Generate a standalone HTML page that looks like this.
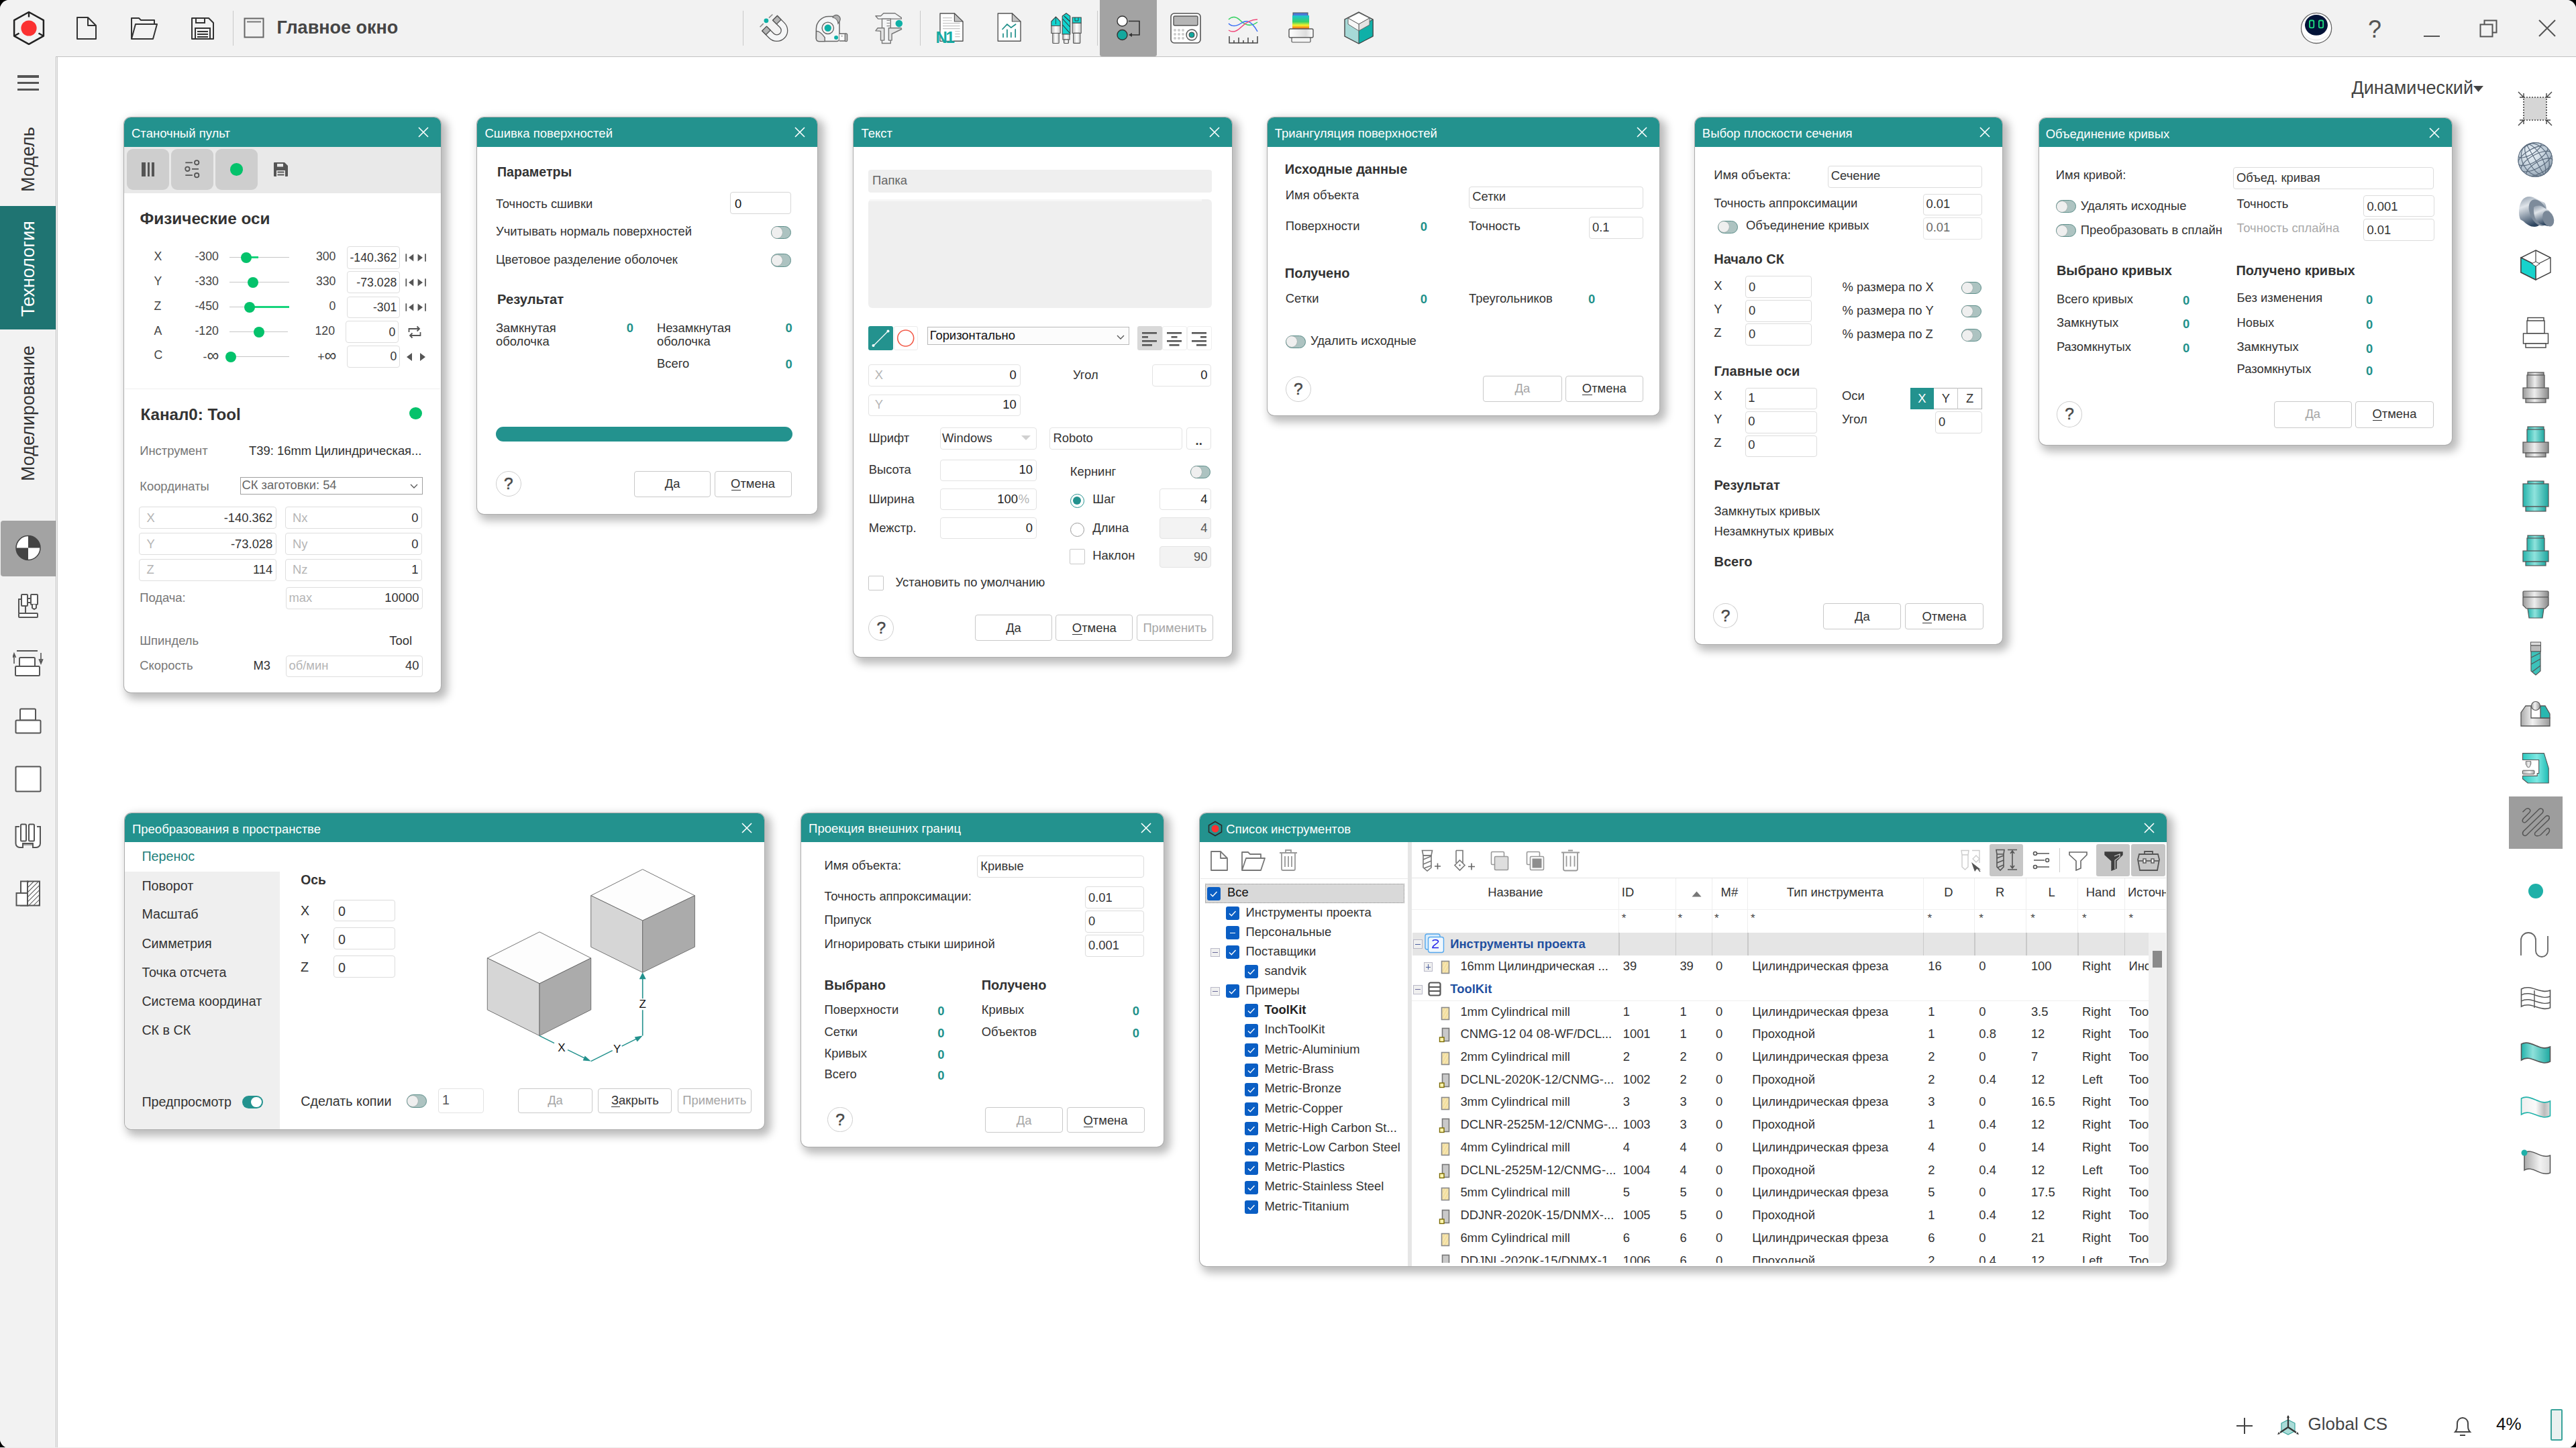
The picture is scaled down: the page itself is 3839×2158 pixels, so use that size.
<!DOCTYPE html><html><head><meta charset="utf-8"><style>
html,body{margin:0;padding:0;width:3839px;height:2158px;overflow:hidden;background:#000;}
body{position:relative;font-family:'Liberation Sans', sans-serif;}
body div{position:absolute;}
.t{line-height:0;height:0;white-space:nowrap;}
</style></head><body>
<div style="left:0px;top:0px;width:3839px;height:2158px;background:#fff;border-radius:14px;overflow:hidden;"></div>
<div style="left:0px;top:0px;width:3839px;height:84px;background:#f2f2f2;border-radius:14px 14px 0 0;"></div>
<div style="left:83px;top:84px;width:3756px;height:1px;background:#c2c2c2;"></div>
<div style="left:0px;top:84px;width:83px;height:2074px;background:#f2f2f2;border-radius:0 0 0 14px;"></div>
<div style="left:83px;top:84px;width:1px;height:2074px;background:#bdbdbd;"></div>
<div style="left:85px;top:85px;width:1px;height:2073px;background:#c8c8c8;"></div>
<div style="left:0px;top:2157px;width:3839px;height:1px;background:#ececec;"></div>
<svg style="position:absolute;left:18px;top:15px;" width="50" height="54" viewBox="0 0 50 54"><polygon points="25,3 46.9,15.2 46.9,38.6 25,50.8 3.1,38.6 3.1,15.2" fill="none" stroke="#222" stroke-width="2.5" stroke-linejoin="round"/>
<circle cx="25" cy="27" r="11.6" fill="#fb3131"/>
<path d="M25 3V10.5M46.5 38.5L39.5 34.5M3.5 38.5L10.5 34.5" stroke="#222" stroke-width="2.4"/></svg>
<svg style="position:absolute;left:112px;top:24px;" width="34" height="38" viewBox="0 0 34 38"><path d="M3 2H19L31 14V34H3Z M19 2V14H31" fill="none" stroke="#333" stroke-width="2" stroke-linejoin="round"/></svg>
<svg style="position:absolute;left:193px;top:24px;" width="44" height="38" viewBox="0 0 44 38"><path d="M3 34V3H14L17 6H37V12 M3 34L9 12H41L35 34Z" fill="none" stroke="#333" stroke-width="2" stroke-linejoin="round"/></svg>
<svg style="position:absolute;left:283px;top:24px;" width="38" height="38" viewBox="0 0 38 38"><path d="M3 3H28L35 10V34H3Z" fill="none" stroke="#333" stroke-width="2" stroke-linejoin="round"/><path d="M9 3V10H22V3" fill="none" stroke="#333" stroke-width="2"/><rect x="8" y="18" width="22" height="16" fill="none" stroke="#333" stroke-width="2"/><path d="M11 23H27M11 27H27M11 31H27" stroke="#333" stroke-width="1.8"/></svg>
<div style="left:347px;top:16px;width:1px;height:52px;background:#c9c9c9;"></div>
<svg style="position:absolute;left:362px;top:25px;" width="33" height="33" viewBox="0 0 33 33"><rect x="2.5" y="2.5" width="28" height="28" fill="none" stroke="#666" stroke-width="2"/><path d="M6 7.5H27" stroke="#777" stroke-width="2"/></svg>
<div class="t" style="top:41.14px;font-size:27px;color:#454545;font-weight:700;left:412.5px;">Главное окно</div>
<div style="left:1107px;top:16px;width:1px;height:52px;background:#c9c9c9;"></div>
<div style="left:1371px;top:16px;width:1px;height:52px;background:#c9c9c9;"></div>
<div style="left:1635px;top:16px;width:1px;height:52px;background:#c9c9c9;"></div>
<svg style="position:absolute;left:1125px;top:15px;" width="60" height="55" viewBox="0 0 60 55"><g transform="translate(32.7,30.4) rotate(-45)"><path d="M-16 -15V0A16 16 0 0 0 16 0V-15H6.5V0A6.5 6.5 0 0 1 -6.5 0V-15Z" fill="#f5f6f7" stroke="#555" stroke-width="1.3" stroke-linejoin="round"/>
<rect x="-16" y="-15" width="9.5" height="8" fill="#b4b4b4" stroke="#555" stroke-width="1.3"/><rect x="6.5" y="-15" width="9.5" height="8" fill="#b4b4b4" stroke="#555" stroke-width="1.3"/></g>
<circle cx="16.9" cy="15.8" r="3.4" fill="#0fb0a6"/><path d="M20.9 11.6L26.4 6.5M7.6 25.3L12.7 20.1" stroke="#888" stroke-width="1.5"/></svg>
<svg style="position:absolute;left:1205px;top:15px;" width="150" height="55" viewBox="0 0 150 55"><path d="M11.4 28A18.4 18.4 0 0 1 29.8 9.6H36A10 10 0 0 1 46 19.6V42.6A4 4 0 0 1 42 46.6H15.4A4 4 0 0 1 11.4 42.6Z" fill="#f5f6f7" stroke="#666" stroke-width="1.5"/>
<path d="M36 10.5A6 6 0 0 1 46.5 16.5L44 20A10 10 0 0 0 36 11Z" fill="#b0b0b0" stroke="#666" stroke-width="1.2"/>
<path d="M11.6 31.4C16 31.4 20 35 24.2 40.8V46.6H15.4A4 4 0 0 1 11.4 42.6Z" fill="#e2e2e2" stroke="#666" stroke-width="1.4"/>
<circle cx="28.8" cy="26.8" r="8.7" fill="#f7f2f2" stroke="#666" stroke-width="1.4"/><circle cx="28.8" cy="26.8" r="5.2" fill="#0fb0a6"/>
<circle cx="41.1" cy="41.1" r="3" fill="#0fb0a6"/>
<path d="M46 35.2H55.5V46H46" fill="#fff" stroke="#666" stroke-width="1.4"/><rect x="54.2" y="35.2" width="3.5" height="11.5" rx="1.5" fill="#bbb" stroke="#666" stroke-width="1.2"/><path d="M49.8 37.5V40" stroke="#777" stroke-width="1"/>
<path d="M99.9 8.7H107.7L111.8 4.7H128.7L138.3 11.4V13.1H103.7Z" fill="#f4f5f6" stroke="#777" stroke-width="1.4" stroke-linejoin="round"/>
<path d="M109.5 13.1H122.3V49.5H109.5Z" fill="#f4f5f6" stroke="#777" stroke-width="1.4"/>
<path d="M116.5 15.4H121.4M116.5 19.5H121.4M116.5 23.6H121.4" stroke="#888" stroke-width="1.1"/>
<path d="M99.9 30.9L103.1 26.8H112.7V45.1H107.5V31.4Z" fill="#e3e3e3" stroke="#777" stroke-width="1.4" stroke-linejoin="round"/>
<path d="M119.4 26.8H138L138.6 28.5L124.1 35.5V45.1H119.4Z" fill="#e3e3e3" stroke="#777" stroke-width="1.4" stroke-linejoin="round"/>
<circle cx="134.8" cy="20.1" r="5.3" fill="#0fb0a6"/></svg>
<svg style="position:absolute;left:1385px;top:12px;" width="235" height="62" viewBox="0 0 235 62"><defs><linearGradient id="dw" x1="0" x2="1"><stop offset="0" stop-color="#bdbdbd"/><stop offset="0.5" stop-color="#fff"/><stop offset="1" stop-color="#c8c8c8"/></linearGradient></defs>
<path d="M16 8H37.4L50 20.5V49.2H16Z" fill="#fff" stroke="#555" stroke-width="1.4" stroke-linejoin="round"/><path d="M37.4 8V20H50Z" fill="#c2c2c2" stroke="#555" stroke-width="1.2" stroke-linejoin="round"/>
<path d="M20 14.6H33.8M20 18.7H33.8M20 22.6H45.6M20 26.6H45.6M20 30.6H45.6M38.3 34.7H45.6M38.3 38.6H45.6M38.3 42.6H45.6" stroke="#c4c4c4" stroke-width="1.1"/>
<rect x="16.8" y="33" width="19" height="15.5" fill="#fff"/>
<text x="9.4" y="52" font-family="Liberation Sans" font-weight="700" font-size="24" fill="#13aaa2" letter-spacing="-2.2">N1</text>
<path d="M102.2 8H123.4L136 20.5V49.2H102.2Z" fill="#fff" stroke="#555" stroke-width="1.4" stroke-linejoin="round"/><path d="M123.4 8V20H136Z" fill="#c2c2c2" stroke="#555" stroke-width="1.2" stroke-linejoin="round"/>
<path d="M109 31.5L115.9 24.2L121.8 29.2L128.6 24.2M110 43.3V38.3M115.9 43.3V32.4M121.8 43.3V36.5M128.2 43.3V31.9" fill="none" stroke="#1f8f8a" stroke-width="1.7" stroke-linecap="round"/>
<path d="M181.8 20L188.5 13L195.2 20V26.5H181.8Z" fill="#12d4cf" stroke="#444" stroke-width="1.1"/><path d="M188.5 14V24" stroke="#333" stroke-width="0.8"/>
<rect x="181.8" y="26.5" width="13.4" height="11" fill="url(#dw)" stroke="#555" stroke-width="1.1"/><rect x="183.8" y="37.5" width="9.4" height="15" rx="1" fill="url(#dw)" stroke="#555" stroke-width="1.1"/>
<path d="M198.2 12L204 7.8L209.8 12V39H198.2Z" fill="#12d4cf" stroke="#444" stroke-width="1.1"/><path d="M198.5 16L209.5 28M198.5 25L209 37M201 12L209.5 20" stroke="#333" stroke-width="1.1"/>
<rect x="199" y="39" width="10" height="8" fill="url(#dw)" stroke="#555" stroke-width="1.1"/><rect x="200.5" y="47" width="7" height="5.5" rx="1" fill="url(#dw)" stroke="#555" stroke-width="1.1"/>
<path d="M213.2 14H226.2V22.4H213.2Z" fill="#12d4cf" stroke="#444" stroke-width="1.1"/><path d="M217 14V19H222V14" fill="none" stroke="#333" stroke-width="0.9"/>
<rect x="213.2" y="22.4" width="13" height="15" fill="url(#dw)" stroke="#555" stroke-width="1.1"/><rect x="214.6" y="37.4" width="10.2" height="15" rx="1" fill="url(#dw)" stroke="#555" stroke-width="1.1"/></svg>
<div style="left:1639px;top:0px;width:85px;height:84px;background:#a3a3a3;border-radius:0 0 3px 3px;"></div>
<svg style="position:absolute;left:1660px;top:18px;" width="44" height="46" viewBox="0 0 44 46"><circle cx="12.5" cy="13.5" r="7.5" fill="#fff" stroke="#333" stroke-width="1.4"/><circle cx="12.5" cy="34" r="7.5" fill="#13a89e" stroke="#333" stroke-width="1.4"/>
<path d="M22 13.5H38V34H24" fill="none" stroke="#333" stroke-width="1.6"/><path d="M22 34L27 31V37Z" fill="#333"/></svg>
<svg style="position:absolute;left:1743px;top:18px;" width="48" height="48" viewBox="0 0 48 48"><rect x="2" y="2" width="44" height="44" rx="5" fill="#fff" stroke="#555" stroke-width="1.6"/><rect x="6" y="6" width="36" height="14" rx="2" fill="#b5b5b5" stroke="#555" stroke-width="1.4"/>
<g fill="#ccc"><circle cx="8" cy="27" r="2"/><circle cx="14" cy="27" r="2"/><circle cx="20" cy="27" r="2"/><circle cx="8" cy="33" r="2"/><circle cx="14" cy="33" r="2"/><circle cx="20" cy="33" r="2"/><circle cx="8" cy="39" r="2"/><circle cx="14" cy="39" r="2"/><circle cx="20" cy="39" r="2"/></g>
<circle cx="33" cy="34" r="8" fill="#f5f5f5" stroke="#555" stroke-width="1.4"/><circle cx="33" cy="34" r="4" fill="#13a89e" stroke="#444" stroke-width="1"/></svg>
<svg style="position:absolute;left:1829px;top:23px;" width="48" height="44" viewBox="0 0 48 44"><path d="M2 6C8 0 14 2 20 8S34 18 45 10" fill="none" stroke="#33d160" stroke-width="1.5"/>
<path d="M2 12C8 18 14 16 20 12S34 4 45 24" fill="none" stroke="#3b6ef5" stroke-width="1.5"/>
<path d="M2 22C8 26 14 24 20 18S34 6 45 6" fill="none" stroke="#f0487a" stroke-width="1.5"/>
<path d="M3 31V41H45V31M10 41V37M17 41V33M24 41V37M31 41V33M38 41V37" fill="none" stroke="#444" stroke-width="1.5"/></svg>
<svg style="position:absolute;left:1918px;top:17px;" width="42" height="50" viewBox="0 0 42 50"><defs><linearGradient id="gr" x1="0" y1="0" x2="0" y2="1"><stop offset="0" stop-color="#1cc3d8"/><stop offset="0.45" stop-color="#35d06a"/><stop offset="0.7" stop-color="#f7f12a"/><stop offset="1" stop-color="#f03a10"/></linearGradient>
<linearGradient id="gs" x1="0" y1="0" x2="1" y2="0"><stop offset="0" stop-color="#fff"/><stop offset="0.7" stop-color="#ddd"/><stop offset="1" stop-color="#fff"/></linearGradient></defs>
<rect x="9" y="2" width="22" height="5" fill="#4b7bd8" stroke="#555"/><rect x="8" y="6" width="25" height="21" fill="url(#gr)"/>
<rect x="3" y="26" width="36" height="13" rx="2" fill="url(#gs)" stroke="#555" stroke-width="1.4"/><rect x="7" y="39" width="28" height="7" rx="1.5" fill="#f4f4f4" stroke="#555" stroke-width="1.2"/></svg>
<svg style="position:absolute;left:2000px;top:16px;" width="50" height="52" viewBox="0 0 50 52"><path d="M25 2L46 13V38L25 49L4 38V13Z" fill="#a7d9d7" stroke="#444" stroke-width="1.4"/>
<path d="M25 49V26L46 13V38Z" fill="#0fb0a8" stroke="#444" stroke-width="1"/>
<path d="M9 11L25 3L41 11L25 20Z" fill="#fff" stroke="#666" stroke-width="1"/><path d="M25 20V30L41 21V11Z" fill="#e3e3e3" stroke="#666" stroke-width="1"/><path d="M9 11V20L25 30V20Z" fill="#f7f7f7" stroke="#666"/>
</svg>
<svg style="position:absolute;left:3420px;top:10px;" width="65" height="65" viewBox="0 0 65 65"><circle cx="32.1" cy="31.9" r="22.6" fill="#fff" stroke="#666" stroke-width="1.3"/><path d="M12 38A22 22 0 0 0 52 38A22 18 0 0 1 12 38Z" fill="#eee"/>
<ellipse cx="32" cy="27.3" rx="17" ry="15.4" fill="#031338"/>
<rect x="22" y="20.5" width="6.3" height="10.8" rx="1.8" fill="none" stroke="#1ee080" stroke-width="1.8"/><rect x="35.9" y="20.5" width="6.3" height="10.8" rx="1.8" fill="none" stroke="#1ee080" stroke-width="1.8"/></svg>
<div class="t" style="top:43.53px;font-size:36px;color:#555;left:3539px;transform:translateX(-50%);">?</div>
<div style="left:3612px;top:53px;width:24px;height:2px;background:#555;"></div>
<svg style="position:absolute;left:3695px;top:29px;" width="28" height="28" viewBox="0 0 28 28"><rect x="1.5" y="7.5" width="18" height="18" fill="none" stroke="#555" stroke-width="2"/><path d="M7.5 7.5V1.5H25.5V19.5H19.5" fill="none" stroke="#555" stroke-width="2"/></svg>
<svg style="position:absolute;left:3783px;top:29px;" width="26" height="26" viewBox="0 0 26 26"><path d="M1 1L25 25M25 1L1 25" stroke="#555" stroke-width="2"/></svg>
<div style="left:26px;top:112.05px;width:32px;height:3.5px;background:#555;"></div>
<div style="left:26px;top:121.85px;width:32px;height:3.5px;background:#555;"></div>
<div style="left:26px;top:131.95px;width:32px;height:3.5px;background:#555;"></div>
<div class="t" style="left:41.74px;top:286px;font-size:27px;color:#333;transform-origin:0 0;transform:rotate(-90deg);">Модель</div>
<div style="left:0px;top:307px;width:83px;height:184px;background:#1f7472;"></div>
<div class="t" style="left:42.34px;top:471.5px;font-size:27px;color:#fff;transform-origin:0 0;transform:rotate(-90deg);">Технология</div>
<div class="t" style="left:42.14px;top:716.5px;font-size:27px;color:#333;transform-origin:0 0;transform:rotate(-90deg);">Моделирование</div>
<div style="left:1px;top:776px;width:82px;height:82.5px;background:#a3a3a3;border-radius:4px 0 0 4px;"></div>
<svg style="position:absolute;left:22px;top:797px;" width="40" height="40" viewBox="0 0 40 40"><circle cx="20" cy="19.6" r="18" fill="#fff" stroke="#444" stroke-width="1.5"/><path d="M20 19.6V1.6A18 18 0 0 1 38 19.6Z M20 19.6V37.6A18 18 0 0 1 2 19.6Z" fill="#444"/></svg>
<svg style="position:absolute;left:26px;top:884px;" width="33" height="38" viewBox="0 0 33 38"><rect x="2" y="30" width="28" height="6" rx="1" fill="#fff" stroke="#555" stroke-width="2"/><path d="M2 30V9H6" fill="none" stroke="#555" stroke-width="2"/><path d="M12 19V30" stroke="#555" stroke-width="2"/><rect x="6" y="2" width="9" height="17" rx="1" fill="#fff" stroke="#555" stroke-width="2"/><rect x="15" y="8" width="5" height="6" fill="#fff" stroke="#555" stroke-width="2"/><rect x="20" y="2" width="10" height="15" rx="1" fill="#fff" stroke="#555" stroke-width="2"/><path d="M22 17V22L25 24L28 22V17" fill="#fff" stroke="#555" stroke-width="2"/></svg>
<svg style="position:absolute;left:19px;top:968px;" width="46" height="42" viewBox="0 0 46 42"><path d="M6 2H37" stroke="#555" stroke-width="2"/><path d="M2 21V8M0 12L2 6L4.5 12" fill="none" stroke="#555" stroke-width="1.6"/><path d="M42 5V20M39.5 15L42 21L44.5 15Z" fill="none" stroke="#555" stroke-width="1.6"/><rect x="10" y="12" width="23" height="13" rx="1.5" fill="#fff" stroke="#555" stroke-width="2"/><rect x="4" y="25" width="36" height="14" rx="1.5" fill="#fff" stroke="#555" stroke-width="2"/></svg>
<svg style="position:absolute;left:22px;top:1055px;" width="40" height="40" viewBox="0 0 40 40"><rect x="8" y="1.5" width="23" height="17" rx="1.5" fill="#fff" stroke="#555" stroke-width="2"/><rect x="1.5" y="18.5" width="37" height="19" rx="1.5" fill="#fff" stroke="#555" stroke-width="2"/></svg>
<svg style="position:absolute;left:22px;top:1141px;" width="40" height="40" viewBox="0 0 40 40"><rect x="1.5" y="1.5" width="37" height="37" rx="1.5" fill="#fff" stroke="#555" stroke-width="2"/></svg>
<svg style="position:absolute;left:22px;top:1227px;" width="40" height="40" viewBox="0 0 40 40"><path d="M7 5H1.5V30A6 6 0 0 0 7.5 36H12V30H27V36H32A6 6 0 0 0 38 30V5H33" fill="#fff" stroke="#555" stroke-width="2"/><rect x="9" y="1.5" width="8" height="25" rx="1.5" fill="#fff" stroke="#555" stroke-width="2"/><rect x="21" y="1.5" width="8" height="25" rx="1.5" fill="#fff" stroke="#555" stroke-width="2"/><path d="M12 30H27M12 32H27" stroke="#555" stroke-width="1.2"/></svg>
<svg style="position:absolute;left:23px;top:1312px;" width="40" height="40" viewBox="0 0 40 40"><defs><pattern id="hatch" width="5" height="5" patternUnits="userSpaceOnUse" patternTransform="rotate(45)"><rect width="5" height="5" fill="#fff"/><path d="M0 0V5" stroke="#555" stroke-width="2"/></pattern></defs>
<rect x="8" y="1.5" width="10" height="36" fill="#fff" stroke="#555" stroke-width="2"/><rect x="1.5" y="19" width="17" height="18.5" fill="#fff" stroke="#555" stroke-width="2"/><rect x="18" y="1.5" width="18" height="36" fill="url(#hatch)" stroke="#555" stroke-width="2"/></svg>
<div class="t" style="top:130.84px;font-size:27px;color:#444;right:153px;">Динамический</div>
<svg style="position:absolute;left:3686px;top:128px;" width="16" height="10" viewBox="0 0 16 10"><path d="M0 0H15L7.5 9Z" fill="#444"/></svg>
<svg style="position:absolute;left:3752px;top:136px;" width="52" height="52" viewBox="0 0 52 52"><rect x="9" y="9" width="34" height="34" fill="#d6d6d6" stroke="#444" stroke-width="1.6" stroke-dasharray="2 2"/>
<path d="M1 1L9 9M9 3V9H3M51 1L43 9M43 3V9H49M1 51L9 43M9 49V43H3M51 51L43 43M43 49V43H49" fill="none" stroke="#444" stroke-width="1.4"/></svg>
<svg style="position:absolute;left:3740px;top:200px;" width="80" height="80" viewBox="0 0 80 80"><defs><radialGradient id="sph" cx="0.38" cy="0.32" r="0.75"><stop offset="0" stop-color="#eef5fb"/><stop offset="0.6" stop-color="#bccad6"/><stop offset="1" stop-color="#8b9baa"/></radialGradient><clipPath id="sclip"><circle cx="38.3" cy="38" r="25.9"/></clipPath></defs>
<circle cx="38.3" cy="38" r="25.9" fill="url(#sph)"/>
<g clip-path="url(#sclip)" fill="none" stroke="#5a6a7c" stroke-width="1.15" transform="rotate(-30 38.3 38)"><ellipse cx="38.3" cy="38" rx="10" ry="25.9"/><ellipse cx="38.3" cy="38" rx="19" ry="25.9"/><ellipse cx="38.3" cy="21.0" rx="19.5" ry="7.4"/><ellipse cx="38.3" cy="31.0" rx="24.9" ry="9.5"/><ellipse cx="38.3" cy="41.0" rx="25.7" ry="9.8"/><ellipse cx="38.3" cy="51.0" rx="22.4" ry="8.5"/><path d="M38.3 12.100000000000001V63.9"/></g>
<circle cx="38.3" cy="38" r="25.4" fill="none" stroke="#5f6f80" stroke-width="1.1"/></svg>
<svg style="position:absolute;left:3745px;top:280px;" width="70" height="70" viewBox="0 0 70 70"><defs><linearGradient id="cyl" x1="0" y1="0" x2="0.35" y2="1"><stop offset="0" stop-color="#8a98a8"/><stop offset="0.35" stop-color="#e0e5ea"/><stop offset="1" stop-color="#2f4660"/></linearGradient></defs>
<path d="M14 18C18 13 24 12 30 14L47 22C51 26 51 40 45 52L37 57C30 60 22 56 16 50L11 47C8 40 8 26 14 18Z" fill="url(#cyl)"/>
<ellipse cx="38" cy="37" rx="12.5" ry="21" transform="rotate(-25 38 37)" fill="#7d8b9b"/>
<path d="M31 29C34 26 40 26 44 28L54 34C58 40 58 52 52 57L44 55C36 53 30 44 31 29Z" fill="url(#cyl)"/>
<ellipse cx="52.7" cy="45.9" rx="8" ry="12" transform="rotate(-20 52.7 45.9)" fill="#7a8898"/></svg>
<svg style="position:absolute;left:3755px;top:371px;" width="48" height="48" viewBox="0 0 48 48"><path d="M24 2L46 13V35L24 46L2 35V13Z" fill="none" stroke="#444" stroke-width="1.4"/><path d="M2 13L24 24L46 13M24 24V46M24 2V24" fill="none" stroke="#444" stroke-width="1.2"/>
<path d="M2 13L24 24V46L2 35Z" fill="#17d3cc" stroke="#444" stroke-width="1.4"/><path d="M18 22L24 19L30 22L24 26Z" fill="#fff" stroke="#444"/></svg>
<svg style="position:absolute;left:3759px;top:472px;" width="40" height="48" viewBox="0 0 40 48"><rect x="8" y="1.5" width="24" height="5" fill="#fff" stroke="#444" stroke-width="1.4"/><rect x="7" y="6" width="26" height="19" fill="#fff" stroke="#444" stroke-width="1.4"/><rect x="1.5" y="25" width="37" height="15" fill="#fff" stroke="#444" stroke-width="1.4"/><rect x="5" y="40" width="30" height="6" fill="#fff" stroke="#444" stroke-width="1.4"/></svg>
<svg style="position:absolute;left:3759px;top:554px;" width="40" height="48" viewBox="0 0 40 48"><defs><linearGradient id="hg554" x1="0" x2="1"><stop offset="0" stop-color="#9a9a9a"/><stop offset="0.45" stop-color="#eee"/><stop offset="1" stop-color="#8a8a8a"/></linearGradient><linearGradient id="ht554" x1="0" x2="1"><stop offset="0" stop-color="#26b3ab"/><stop offset="0.45" stop-color="#8fe3dd"/><stop offset="1" stop-color="#1fa69f"/></linearGradient></defs><rect x="8" y="1" width="24" height="5" fill="url(#hg554)" stroke="#555" stroke-width="1.2"/><rect x="7" y="5" width="26" height="22" fill="url(#hg554)" stroke="#555" stroke-width="1.2"/><rect x="1" y="24" width="38" height="16" fill="url(#hg554)" stroke="#555" stroke-width="1.2"/><rect x="5" y="40" width="30" height="6" fill="url(#hg554)" stroke="#555" stroke-width="1.2"/></svg>
<svg style="position:absolute;left:3759px;top:635px;" width="40" height="48" viewBox="0 0 40 48"><defs><linearGradient id="hg635" x1="0" x2="1"><stop offset="0" stop-color="#9a9a9a"/><stop offset="0.45" stop-color="#eee"/><stop offset="1" stop-color="#8a8a8a"/></linearGradient><linearGradient id="ht635" x1="0" x2="1"><stop offset="0" stop-color="#26b3ab"/><stop offset="0.45" stop-color="#8fe3dd"/><stop offset="1" stop-color="#1fa69f"/></linearGradient></defs><rect x="8" y="1" width="24" height="5" fill="url(#ht635)" stroke="#555" stroke-width="1.2"/><rect x="7" y="5" width="26" height="22" fill="url(#ht635)" stroke="#555" stroke-width="1.2"/><rect x="1" y="24" width="38" height="16" fill="url(#hg635)" stroke="#555" stroke-width="1.2"/><rect x="5" y="40" width="30" height="6" fill="url(#hg635)" stroke="#555" stroke-width="1.2"/></svg>
<svg style="position:absolute;left:3759px;top:716px;" width="40" height="48" viewBox="0 0 40 48"><defs><linearGradient id="tc" x1="0" x2="1"><stop offset="0" stop-color="#26b3ab"/><stop offset="0.45" stop-color="#8fe3dd"/><stop offset="1" stop-color="#1fa69f"/></linearGradient></defs><rect x="8" y="1" width="24" height="5" fill="url(#tc)" stroke="#555" stroke-width="1.2"/><rect x="1" y="5" width="38" height="34" fill="url(#tc)" stroke="#555" stroke-width="1.2"/><rect x="5" y="39" width="30" height="7" fill="url(#tc)" stroke="#555" stroke-width="1.2"/></svg>
<svg style="position:absolute;left:3759px;top:797px;" width="40" height="48" viewBox="0 0 40 48"><defs><linearGradient id="hg797" x1="0" x2="1"><stop offset="0" stop-color="#9a9a9a"/><stop offset="0.45" stop-color="#eee"/><stop offset="1" stop-color="#8a8a8a"/></linearGradient><linearGradient id="ht797" x1="0" x2="1"><stop offset="0" stop-color="#26b3ab"/><stop offset="0.45" stop-color="#8fe3dd"/><stop offset="1" stop-color="#1fa69f"/></linearGradient></defs><rect x="8" y="1" width="24" height="5" fill="url(#ht797)" stroke="#555" stroke-width="1.2"/><rect x="7" y="5" width="26" height="22" fill="url(#ht797)" stroke="#555" stroke-width="1.2"/><rect x="1" y="24" width="38" height="16" fill="url(#ht797)" stroke="#555" stroke-width="1.2"/><rect x="5" y="40" width="30" height="6" fill="url(#ht797)" stroke="#555" stroke-width="1.2"/></svg>
<svg style="position:absolute;left:3759px;top:880px;" width="40" height="44" viewBox="0 0 40 44"><defs><linearGradient id="cg" x1="0" x2="1"><stop offset="0" stop-color="#9a9a9a"/><stop offset="0.45" stop-color="#eee"/><stop offset="1" stop-color="#8a8a8a"/></linearGradient><linearGradient id="ct" x1="0" x2="1"><stop offset="0" stop-color="#26b3ab"/><stop offset="0.45" stop-color="#8fe3dd"/><stop offset="1" stop-color="#1fa69f"/></linearGradient></defs><rect x="1" y="1" width="38" height="9" rx="1.5" fill="url(#cg)" stroke="#555" stroke-width="1.2"/><path d="M1 10H39V22L34 27H6L1 22Z" fill="url(#cg)" stroke="#555" stroke-width="1.2"/><path d="M8 27H32L30 41H10Z" fill="url(#ct)" stroke="#555" stroke-width="1.2"/></svg>
<svg style="position:absolute;left:3770px;top:956px;" width="18" height="52" viewBox="0 0 18 52"><rect x="1.5" y="1" width="15" height="5" fill="#ddd" stroke="#555"/><rect x="1.5" y="6" width="15" height="9" fill="#bbb" stroke="#555"/><path d="M2 15H16V44L9 50L2 44Z" fill="#3cc2ba" stroke="#555" stroke-width="1.2"/><path d="M2 24L16 17M2 34L16 26M4 45L16 36" stroke="#555" stroke-width="1.2"/></svg>
<svg style="position:absolute;left:3756px;top:1044px;" width="46" height="40" viewBox="0 0 46 40"><defs><linearGradient id="vg" x1="0" x2="1"><stop offset="0" stop-color="#aaa"/><stop offset="0.4" stop-color="#f2f2f2"/><stop offset="1" stop-color="#999"/></linearGradient></defs><path d="M1 38V18L8 8H16V26H44V38Z" fill="url(#vg)" stroke="#555" stroke-width="1.3"/><path d="M30 8H37L44 20V26H30Z" fill="#29b8b0" stroke="#555" stroke-width="1.3"/><circle cx="23" cy="8" r="6.5" fill="url(#vg)" stroke="#555" stroke-width="1.2"/></svg>
<svg style="position:absolute;left:3745px;top:1110px;" width="70" height="70" viewBox="0 0 70 70"><defs><linearGradient id="mt" x1="0" x2="1"><stop offset="0" stop-color="#2cc9c0"/><stop offset="0.55" stop-color="#7ee9e3"/><stop offset="1" stop-color="#1fbdb5"/></linearGradient><linearGradient id="mg" x1="0" x2="1"><stop offset="0" stop-color="#bbb"/><stop offset="0.6" stop-color="#f4f4f4"/><stop offset="1" stop-color="#aaa"/></linearGradient></defs>
<path d="M14.5 12.6H46.4L53.2 34.8V57H22.2L14.5 50.7V46.4H36.2V42.5H38.7V22.5H14.5Z" fill="url(#mt)" stroke="#555" stroke-width="1.1" stroke-linejoin="round"/>
<path d="M19.3 24.6H26.8V29L24.6 33.3H21.7L19.3 29Z" fill="url(#mg)" stroke="#666" stroke-width="0.9"/>
<rect x="14.5" y="38.2" width="17.4" height="5.5" rx="0.8" fill="url(#mg)" stroke="#555" stroke-width="1"/></svg>
<div style="left:3739px;top:1187px;width:80px;height:78px;background:#9d9d9d;"></div>
<svg style="position:absolute;left:3750px;top:1195px;" width="60" height="60" viewBox="0 0 60 60"><path d="M9.5 15.3L13.7 11.2Q17.5 8 20.7 12Q21.5 14 19.5 16L10.4 25Q8 28.5 10.5 30.5Q12.5 32 15 29.5L33.6 11.2Q37 8.5 39.5 11.5Q41 14 39 16.5L10.5 44Q8.5 47 10.5 49.5Q13 51.5 15.5 49.5L44 21.5Q47 19.5 49 22Q50 24.5 48 27L28 46Q26.5 49.5 29.5 50.5Q33 51.5 36 49.5L45.5 40Q48.5 38 49.5 42Q50 45.5 44.3 50.1" fill="none" stroke="#555" stroke-width="1.5"/></svg>
<svg style="position:absolute;left:3767px;top:1316px;" width="24" height="24" viewBox="0 0 24 24"><circle cx="12" cy="12" r="11" fill="#1fb0a8"/></svg>
<svg style="position:absolute;left:3755px;top:1387px;" width="48" height="44" viewBox="0 0 48 44"><path d="M2 37V14A11 11 0 0 1 24 14V30A9 9 0 0 0 42 30V8" fill="none" stroke="#666" stroke-width="1.8"/></svg>
<svg style="position:absolute;left:3756px;top:1470px;" width="46" height="40" viewBox="0 0 46 40"><path d="M1.5 4C15 -4 30 12 44.5 6V32C30 38 15 22 1.5 30Z" fill="#fff" stroke="#555" stroke-width="1.6"/><path d="M1.5 13C15 5 30 21 44.5 15M1.5 22C15 14 30 30 44.5 24M21 6V32" fill="none" stroke="#555" stroke-width="1.4"/></svg>
<svg style="position:absolute;left:3756px;top:1552px;" width="46" height="38" viewBox="0 0 46 38"><defs><linearGradient id="fl" x1="0" x2="1"><stop offset="0" stop-color="#22b3ab"/><stop offset="0.4" stop-color="#8ee0da"/><stop offset="1" stop-color="#20aaa2"/></linearGradient></defs><path d="M1.5 4C15 -4 30 16 44.5 8V30C30 38 15 18 1.5 28Z" fill="url(#fl)" stroke="#555" stroke-width="1.6"/></svg>
<svg style="position:absolute;left:3756px;top:1633px;" width="46" height="38" viewBox="0 0 46 38"><defs><linearGradient id="fw" x1="0" x2="1"><stop offset="0" stop-color="#eee"/><stop offset="0.5" stop-color="#fafafa"/><stop offset="0.8" stop-color="#bbb"/><stop offset="1" stop-color="#ddd"/></linearGradient></defs><path d="M1.5 4C15 -4 30 16 44.5 8V30C30 38 15 18 1.5 28Z" fill="url(#fw)" stroke="#22b3ab" stroke-width="1.6"/></svg>
<svg style="position:absolute;left:3756px;top:1712px;" width="48" height="40" viewBox="0 0 48 40"><defs><linearGradient id="fg" x1="0" x2="1"><stop offset="0" stop-color="#aaa"/><stop offset="0.6" stop-color="#f2f2f2"/><stop offset="1" stop-color="#ddd"/></linearGradient></defs><path d="M6 6C18 -2 30 16 44.5 10V36C30 42 18 24 6 32Z" fill="url(#fg)" stroke="#555" stroke-width="1.5"/><circle cx="6" cy="6" r="4.5" fill="#1fb0a8"/></svg>
<svg style="position:absolute;left:3332px;top:2112px;" width="26" height="26" viewBox="0 0 26 26"><path d="M13 1V25M1 13H25" stroke="#444" stroke-width="2"/></svg>
<svg style="position:absolute;left:3393px;top:2108px;" width="34" height="32" viewBox="0 0 34 32"><path d="M17 8L27 13V25L17 30L7 25V13Z" fill="#a9dcd8" stroke="#3aa39b" stroke-width="1.2"/><path d="M17 2V19L5 27M17 19L29 27" fill="none" stroke="#333" stroke-width="2.2"/><path d="M15 5L17 1L19 5Z M3 26L1 30L5 29Z M31 26L33 30L29 29Z" fill="#333"/></svg>
<div class="t" style="top:2122.39px;font-size:26px;color:#444;left:3439.5px;">Global CS</div>
<svg style="position:absolute;left:3655px;top:2106px;" width="30" height="36" viewBox="0 0 30 36"><path d="M4 28C7 25 7 22 7 15A8 8 0 0 1 23 15C23 22 23 25 26 28Z" fill="none" stroke="#444" stroke-width="2"/><path d="M11 33H19" stroke="#444" stroke-width="2"/></svg>
<div class="t" style="top:2122.39px;font-size:26px;color:#111;left:3720px;">4%</div>
<div style="left:3800.5px;top:2099.5px;width:18.1px;height:47.7px;background:#e9f1f0;border:2px solid #3aa39b;box-sizing:border-box;border-radius:2px;"></div>
<div style="left:185px;top:175px;width:472px;height:857px;background:#fff;border-radius:10px;box-shadow:0 0 0 1px #adadad, 6px 6px 13px 4px rgba(0,0,0,0.27);"></div>
<div style="left:185px;top:175px;width:472px;height:44px;background:#23928e;border-radius:10px 10px 0 0;"></div>
<div class="t" style="top:198.59px;font-size:18.5px;color:#fff;left:196px;">Станочный пульт</div>
<svg style="position:absolute;left:623px;top:189px;" width="16" height="16" viewBox="0 0 16 16"><path d="M1 1L15 15M15 1L1 15" stroke="#fff" stroke-width="1.6"/></svg>
<div style="left:185px;top:219px;width:472px;height:69px;background:#e9e9e9;"></div>
<div style="left:189px;top:222px;width:62.6px;height:61.1px;background:#cecece;border-radius:9px;"></div>
<div style="left:255px;top:222px;width:62.7px;height:61.1px;background:#cecece;border-radius:9px;"></div>
<div style="left:321px;top:222px;width:62.8px;height:61.1px;background:#cecece;border-radius:9px;"></div>
<div style="left:211px;top:241.7px;width:6.1px;height:21.7px;background:#555;"></div>
<div style="left:220.3px;top:241.7px;width:3.1px;height:21.7px;background:#555;"></div>
<div style="left:226.4px;top:241.7px;width:3.2px;height:21.7px;background:#555;"></div>
<svg style="position:absolute;left:274px;top:236px;" width="26" height="30" viewBox="0 0 26 30"><g fill="none" stroke="#555" stroke-width="1.8"><path d="M2.3 6.3H12.9M12 15.8H22M2.3 25.2H12.9"/><circle cx="19.2" cy="6.3" r="3.2"/><circle cx="5.4" cy="15.8" r="3.2"/><circle cx="19.2" cy="25.2" r="3.2"/></g></svg>
<div style="left:342.8px;top:243.1px;width:18.8px;height:18.8px;background:#04c26b;border-radius:50%;"></div>
<svg style="position:absolute;left:407px;top:241px;" width="23" height="23" viewBox="0 0 23 23"><path d="M1 2A1 1 0 0 1 2 1H17L22 6V21A1 1 0 0 1 21 22H2A1 1 0 0 1 1 21Z" fill="#555"/><rect x="6" y="3" width="9" height="4.5" fill="#e9e9e9"/><rect x="5" y="13" width="13" height="9" fill="#e9e9e9"/><rect x="6.5" y="14.5" width="10" height="2" fill="#555"/><rect x="6.5" y="18.5" width="10" height="2" fill="#555"/></svg>
<div class="t" style="top:326.38px;font-size:24.3px;color:#333;font-weight:700;left:208.6px;">Физические оси</div>
<div class="t" style="top:381.57px;font-size:17.7px;color:#444;left:229.6px;">X</div>
<div class="t" style="top:381.57px;font-size:17.7px;color:#444;right:3513.2px;">-300</div>
<div style="left:341.5px;top:383px;width:89.2px;height:1px;background:#c6c6c6;"></div>
<div style="left:366.6px;top:382.4px;width:18.4px;height:3px;background:#17d47c;"></div>
<div style="left:358.6px;top:375.9px;width:16px;height:16px;background:#04c26b;border-radius:50%;"></div>
<div class="t" style="top:381.57px;font-size:17.7px;color:#444;right:3338.6px;">300</div>
<div style="left:517.1px;top:367.2px;width:79.2px;height:33.4px;background:#fff;border:1px solid #dedede;border-radius:4px;box-sizing:border-box;"></div>
<div class="t" style="top:383.57px;font-size:17.7px;color:#333;right:3247.7px;">-140.362</div>
<svg style="position:absolute;left:604px;top:377.9px;" width="32" height="12" viewBox="0 0 32 12"><path d="M1.3 0.2V11.8M30 0.2V11.8" stroke="#5a5a5a" stroke-width="1.8"/><path d="M5 6L12.3 0.4V11.6Z M26 6L18.6 0.4V11.6Z" fill="#555"/></svg>
<div class="t" style="top:418.77px;font-size:17.7px;color:#444;left:229.6px;">Y</div>
<div class="t" style="top:418.77px;font-size:17.7px;color:#444;right:3513.2px;">-330</div>
<div style="left:341.5px;top:420px;width:89.2px;height:1px;background:#c6c6c6;"></div>
<div style="left:369px;top:412.6px;width:16px;height:16px;background:#04c26b;border-radius:50%;"></div>
<div class="t" style="top:418.77px;font-size:17.7px;color:#444;right:3338.6px;">330</div>
<div style="left:517.1px;top:404px;width:79.2px;height:33.2px;background:#fff;border:1px solid #dedede;border-radius:4px;box-sizing:border-box;"></div>
<div class="t" style="top:420.77px;font-size:17.7px;color:#333;right:3247.7px;">-73.028</div>
<svg style="position:absolute;left:604px;top:414.6px;" width="32" height="12" viewBox="0 0 32 12"><path d="M1.3 0.2V11.8M30 0.2V11.8" stroke="#5a5a5a" stroke-width="1.8"/><path d="M5 6L12.3 0.4V11.6Z M26 6L18.6 0.4V11.6Z" fill="#555"/></svg>
<div class="t" style="top:455.87px;font-size:17.7px;color:#444;left:229.6px;">Z</div>
<div class="t" style="top:455.87px;font-size:17.7px;color:#444;right:3513.2px;">-450</div>
<div style="left:341.5px;top:457px;width:89.2px;height:1px;background:#c6c6c6;"></div>
<div style="left:371.7px;top:456.3px;width:59px;height:3px;background:#17d47c;"></div>
<div style="left:363.7px;top:449.8px;width:16px;height:16px;background:#04c26b;border-radius:50%;"></div>
<div class="t" style="top:455.87px;font-size:17.7px;color:#444;right:3338.6px;">0</div>
<div style="left:517.1px;top:441.5px;width:79.2px;height:32.6px;background:#fff;border:1px solid #dedede;border-radius:4px;box-sizing:border-box;"></div>
<div class="t" style="top:457.87px;font-size:17.7px;color:#333;right:3247.7px;">-301</div>
<svg style="position:absolute;left:604px;top:451.8px;" width="32" height="12" viewBox="0 0 32 12"><path d="M1.3 0.2V11.8M30 0.2V11.8" stroke="#5a5a5a" stroke-width="1.8"/><path d="M5 6L12.3 0.4V11.6Z M26 6L18.6 0.4V11.6Z" fill="#555"/></svg>
<div class="t" style="top:492.57px;font-size:17.7px;color:#444;left:229.6px;">A</div>
<div class="t" style="top:492.57px;font-size:17.7px;color:#444;right:3513.2px;">-120</div>
<div style="left:341.5px;top:494px;width:87.5px;height:1px;background:#c6c6c6;"></div>
<div style="left:377.6px;top:486.7px;width:16px;height:16px;background:#04c26b;border-radius:50%;"></div>
<div class="t" style="top:492.57px;font-size:17.7px;color:#444;right:3340px;">120</div>
<div style="left:515.4px;top:478.2px;width:78.9px;height:33px;background:#fff;border:1px solid #dedede;border-radius:4px;box-sizing:border-box;"></div>
<div class="t" style="top:494.57px;font-size:17.7px;color:#333;right:3249.7px;">0</div>
<svg style="position:absolute;left:607px;top:484.7px;" width="22" height="20" viewBox="0 0 22 20"><path d="M2.5 10V5H18M14.5 1.5L18 5L14.5 8.5 M19.5 10V15H4M7.5 11.5L4 15L7.5 18.5" fill="none" stroke="#555" stroke-width="1.8"/></svg>
<div class="t" style="top:529.27px;font-size:17.7px;color:#444;left:229.6px;">C</div>
<div class="t" style="top:529.27px;font-size:17.7px;color:#444;right:3513.2px;">-<span style="font-size:25px;letter-spacing:-0.5px">∞</span></div>
<div style="left:341.5px;top:531px;width:89.2px;height:1px;background:#c6c6c6;"></div>
<div style="left:336px;top:523.65px;width:16px;height:16px;background:#04c26b;border-radius:50%;"></div>
<div class="t" style="top:529.27px;font-size:17.7px;color:#444;right:3338.1px;">+<span style="font-size:25px;letter-spacing:-0.5px">∞</span></div>
<div style="left:517.1px;top:515.4px;width:79.2px;height:32.5px;background:#fff;border:1px solid #dedede;border-radius:4px;box-sizing:border-box;"></div>
<div class="t" style="top:531.27px;font-size:17.7px;color:#333;right:3247.7px;">0</div>
<svg style="position:absolute;left:605px;top:524.65px;" width="30" height="14" viewBox="0 0 30 14"><path d="M1 7L9 1V13Z M29 7L21 1V13Z" fill="#555"/></svg>
<div style="left:186px;top:578.5px;width:470px;height:1px;background:#efefef;"></div>
<div class="t" style="top:617.51px;font-size:24.2px;color:#333;font-weight:700;left:209.4px;">Канал0: Tool</div>
<div style="left:609.9px;top:606.7px;width:18.8px;height:18.8px;background:#04c26b;border-radius:50%;"></div>
<div class="t" style="top:671.62px;font-size:18.4px;color:#777;left:208.2px;">Инструмент</div>
<div class="t" style="top:671.62px;font-size:18.4px;color:#333;right:3210.6px;">T39: 16mm Цилиндрическая...</div>
<div class="t" style="top:725.02px;font-size:18.4px;color:#777;left:208.2px;">Координаты</div>
<div style="left:358px;top:711.3px;width:271.5px;height:25.9px;background:#fff;border:1px solid #a0a0a0;box-sizing:border-box;"></div>
<div class="t" style="top:722.82px;font-size:18.4px;color:#666;left:360.5px;">СК заготовки: 54</div>
<svg style="position:absolute;left:611px;top:721px;" width="12" height="8" viewBox="0 0 12 8"><path d="M1 1L6 6L11 1" fill="none" stroke="#555" stroke-width="1.3"/></svg>
<div style="left:207.3px;top:755.3px;width:204.6px;height:33.1px;background:#fff;border:1px solid #dedede;border-radius:4px;box-sizing:border-box;"></div>
<div class="t" style="top:771.92px;font-size:18.4px;color:#b5b5b5;left:218.5px;">X</div>
<div class="t" style="top:771.92px;font-size:18.4px;color:#333;right:3432.7px;">-140.362</div>
<div style="left:424.9px;top:755.3px;width:204.5px;height:33.1px;background:#fff;border:1px solid #dedede;border-radius:4px;box-sizing:border-box;"></div>
<div class="t" style="top:771.92px;font-size:18.4px;color:#b5b5b5;left:436px;">Nx</div>
<div class="t" style="top:771.92px;font-size:18.4px;color:#333;right:3215.5px;">0</div>
<div style="left:207.3px;top:794.3px;width:204.6px;height:33.1px;background:#fff;border:1px solid #dedede;border-radius:4px;box-sizing:border-box;"></div>
<div class="t" style="top:810.92px;font-size:18.4px;color:#b5b5b5;left:218.5px;">Y</div>
<div class="t" style="top:810.92px;font-size:18.4px;color:#333;right:3432.7px;">-73.028</div>
<div style="left:424.9px;top:794.3px;width:204.5px;height:33.1px;background:#fff;border:1px solid #dedede;border-radius:4px;box-sizing:border-box;"></div>
<div class="t" style="top:810.92px;font-size:18.4px;color:#b5b5b5;left:436px;">Ny</div>
<div class="t" style="top:810.92px;font-size:18.4px;color:#333;right:3215.5px;">0</div>
<div style="left:207.3px;top:832.6px;width:204.6px;height:33.1px;background:#fff;border:1px solid #dedede;border-radius:4px;box-sizing:border-box;"></div>
<div class="t" style="top:849.22px;font-size:18.4px;color:#b5b5b5;left:218.5px;">Z</div>
<div class="t" style="top:849.22px;font-size:18.4px;color:#333;right:3432.7px;">114</div>
<div style="left:424.9px;top:832.6px;width:204.5px;height:33.1px;background:#fff;border:1px solid #dedede;border-radius:4px;box-sizing:border-box;"></div>
<div class="t" style="top:849.22px;font-size:18.4px;color:#b5b5b5;left:436px;">Nz</div>
<div class="t" style="top:849.22px;font-size:18.4px;color:#333;right:3215.5px;">1</div>
<div class="t" style="top:891.12px;font-size:18.4px;color:#777;left:208.2px;">Подача:</div>
<div style="left:425.5px;top:874.8px;width:204.5px;height:33.2px;background:#fff;border:1px solid #dedede;border-radius:4px;box-sizing:border-box;"></div>
<div class="t" style="top:891.12px;font-size:18.4px;color:#b5b5b5;left:430.5px;">max</div>
<div class="t" style="top:891.12px;font-size:18.4px;color:#333;right:3214.5px;">10000</div>
<div class="t" style="top:955.12px;font-size:18.4px;color:#777;left:208.2px;">Шпиндель</div>
<div class="t" style="top:955.12px;font-size:18.4px;color:#333;right:3225px;">Tool</div>
<div class="t" style="top:992.12px;font-size:18.4px;color:#777;left:208.2px;">Скорость</div>
<div class="t" style="top:992.12px;font-size:18.4px;color:#333;right:3436px;">M3</div>
<div style="left:425.5px;top:976.8px;width:204.5px;height:32.4px;background:#fff;border:1px solid #dedede;border-radius:4px;box-sizing:border-box;"></div>
<div class="t" style="top:992.42px;font-size:18.4px;color:#b5b5b5;left:430.5px;">об/мин</div>
<div class="t" style="top:992.42px;font-size:18.4px;color:#333;right:3214.5px;">40</div>
<div style="left:711px;top:175px;width:507px;height:591.3px;background:#fff;border-radius:10px;box-shadow:0 0 0 1px #adadad, 6px 6px 13px 4px rgba(0,0,0,0.27);"></div>
<div style="left:711px;top:175px;width:507px;height:44px;background:#23928e;border-radius:10px 10px 0 0;"></div>
<div class="t" style="top:198.59px;font-size:18.5px;color:#fff;left:722.5px;">Сшивка поверхностей</div>
<svg style="position:absolute;left:1184px;top:189px;" width="16" height="16" viewBox="0 0 16 16"><path d="M1 1L15 15M15 1L1 15" stroke="#fff" stroke-width="1.6"/></svg>
<div class="t" style="top:255.81px;font-size:19.6px;color:#333;font-weight:700;left:741px;">Параметры</div>
<div class="t" style="top:304.12px;font-size:18.4px;color:#333;left:739px;">Точность сшивки</div>
<div style="left:1088px;top:286px;width:91px;height:32.5px;background:#fff;border:1px solid #d6d6d6;border-radius:4px;box-sizing:border-box;"></div>
<div class="t" style="top:304.12px;font-size:18.4px;color:#111;left:1095px;">0</div>
<div class="t" style="top:344.62px;font-size:18.4px;color:#333;left:739px;">Учитывать нормаль поверхностей</div>
<div style="left:1148.8px;top:336.9px;width:30.1px;height:19.3px;background:#adc3c1;border:1.5px solid #5e8f8b;border-radius:9.65px;box-sizing:border-box;"></div>
<div style="left:1149.8px;top:338.4px;width:16.3px;height:16.3px;background:#efefef;border-radius:50%;box-shadow:0 0 1px #777;"></div>
<div class="t" style="top:387.22px;font-size:18.4px;color:#333;left:739px;">Цветовое разделение оболочек</div>
<div style="left:1148.8px;top:378.3px;width:30.1px;height:19.4px;background:#adc3c1;border:1.5px solid #5e8f8b;border-radius:9.7px;box-sizing:border-box;"></div>
<div style="left:1149.8px;top:379.8px;width:16.4px;height:16.4px;background:#efefef;border-radius:50%;box-shadow:0 0 1px #777;"></div>
<div class="t" style="top:446.4px;font-size:20.2px;color:#333;font-weight:700;left:741px;">Результат</div>
<div class="t" style="top:488.82px;font-size:18.4px;color:#333;left:739px;">Замкнутая</div>
<div class="t" style="top:508.82px;font-size:18.4px;color:#333;left:739px;">оболочка</div>
<div class="t" style="top:489.22px;font-size:18.4px;color:#1f918b;font-weight:700;right:2895px;">0</div>
<div class="t" style="top:488.82px;font-size:18.4px;color:#333;left:979px;">Незамкнутая</div>
<div class="t" style="top:508.82px;font-size:18.4px;color:#333;left:979px;">оболочка</div>
<div class="t" style="top:489.22px;font-size:18.4px;color:#1f918b;font-weight:700;right:2658.3px;">0</div>
<div class="t" style="top:541.62px;font-size:18.4px;color:#333;left:979px;">Всего</div>
<div class="t" style="top:542.62px;font-size:18.4px;color:#1f918b;font-weight:700;right:2658.3px;">0</div>
<div style="left:738.7px;top:635.5px;width:442.5px;height:22.8px;background:#23928e;border-radius:12px;"></div>
<div style="left:738.7px;top:701.7px;width:38.1px;height:38.1px;background:#fff;border:1px solid #cfcfcf;border-radius:50%;box-sizing:border-box;"></div>
<div class="t" style="top:720.96px;font-size:24.5px;color:#4a4a4a;left:757.75px;transform:translateX(-50%);-webkit-text-stroke:0.5px #4a4a4a;">?</div>
<div style="left:944.8px;top:701.7px;width:114.6px;height:39.5px;background:#fff;border:1px solid #c9c9c9;border-radius:4px;box-sizing:border-box;"></div>
<div class="t" style="top:721.22px;font-size:18.4px;color:#333;left:1002.1px;transform:translateX(-50%);">Да</div>
<div style="left:1064.6px;top:701.7px;width:115px;height:39.5px;background:#fff;border:1px solid #c9c9c9;border-radius:4px;box-sizing:border-box;"></div>
<div class="t" style="top:721.22px;font-size:18.4px;color:#333;left:1122.1px;transform:translateX(-50%);">Отмена</div>
<div style="left:1089.5px;top:730px;width:14.5px;height:1.3px;background:#333;"></div>
<div style="left:1272.4px;top:175px;width:563.6px;height:804.4px;background:#fff;border-radius:10px;box-shadow:0 0 0 1px #adadad, 6px 6px 13px 4px rgba(0,0,0,0.27);"></div>
<div style="left:1272.4px;top:175px;width:563.6px;height:44px;background:#23928e;border-radius:10px 10px 0 0;"></div>
<div class="t" style="top:198.59px;font-size:18.5px;color:#fff;left:1283.5px;">Текст</div>
<svg style="position:absolute;left:1802px;top:189px;" width="16" height="16" viewBox="0 0 16 16"><path d="M1 1L15 15M15 1L1 15" stroke="#fff" stroke-width="1.6"/></svg>
<div style="left:1294px;top:253.4px;width:511.6px;height:33.6px;background:#efefef;border-radius:4px;"></div>
<div class="t" style="top:269.12px;font-size:18.4px;color:#666;left:1300px;">Папка</div>
<div style="left:1294px;top:296.7px;width:511.6px;height:162.5px;background:#efefef;border-radius:6px;"></div>
<div style="left:1296px;top:296.7px;width:495px;height:3.8px;background:#f6f6f6;"></div>
<div style="left:1294px;top:486px;width:37px;height:36.4px;background:#23928e;border-radius:3px;"></div>
<svg style="position:absolute;left:1294px;top:486px;" width="37" height="36.4" viewBox="0 0 37 36.4"><path d="M8 29L29 8" stroke="#fff" stroke-width="1.3"/><circle cx="7.5" cy="29" r="2" fill="#fff"/><circle cx="29.5" cy="7.5" r="2" fill="#fff"/></svg>
<div style="left:1331.8px;top:486px;width:35.9px;height:36.4px;background:#fff;border:1px solid #ececec;border-radius:3px;box-sizing:border-box;"></div>
<svg style="position:absolute;left:1334px;top:488px;" width="32" height="32" viewBox="0 0 32 32"><circle cx="15.7" cy="16" r="12" fill="none" stroke="#f25a48" stroke-width="1.6"/></svg>
<div style="left:1382.4px;top:487.3px;width:301.1px;height:26.3px;background:#fcfcfc;border:1px solid #b9b9b9;box-sizing:border-box;"></div>
<div class="t" style="top:500.32px;font-size:18.4px;color:#111;left:1385.7px;">Горизонтально</div>
<svg style="position:absolute;left:1664px;top:499px;" width="12" height="8" viewBox="0 0 12 8"><path d="M1 1L6 6L11 1" fill="none" stroke="#555" stroke-width="1.3"/></svg>
<div style="left:1694.5px;top:486px;width:37px;height:36.4px;background:#d9d9d9;border-radius:3px;"></div>
<div style="left:1732px;top:486px;width:36.5px;height:36.4px;background:#fff;border:1px solid #eee;border-radius:3px;box-sizing:border-box;"></div>
<div style="left:1769px;top:486px;width:36.5px;height:36.4px;background:#fff;border:1px solid #eee;border-radius:3px;box-sizing:border-box;"></div>
<svg style="position:absolute;left:1700px;top:494px;" width="26" height="22" viewBox="0 0 26 22"><rect x="2" y="1" width="22" height="2.6" fill="#555"/><rect x="2" y="7" width="9" height="2.6" fill="#555"/><rect x="2" y="13" width="22" height="2.6" fill="#555"/><rect x="2" y="19" width="15" height="2.6" fill="#555"/></svg>
<svg style="position:absolute;left:1737px;top:494px;" width="26" height="22" viewBox="0 0 26 22"><rect x="2" y="1" width="22" height="2.6" fill="#555"/><rect x="8.5" y="7" width="9" height="2.6" fill="#555"/><rect x="2" y="13" width="22" height="2.6" fill="#555"/><rect x="5.5" y="19" width="15" height="2.6" fill="#555"/></svg>
<svg style="position:absolute;left:1774px;top:494px;" width="26" height="22" viewBox="0 0 26 22"><rect x="2" y="1" width="22" height="2.6" fill="#555"/><rect x="15" y="7" width="9" height="2.6" fill="#555"/><rect x="2" y="13" width="22" height="2.6" fill="#555"/><rect x="9" y="19" width="15" height="2.6" fill="#555"/></svg>
<div style="left:1294px;top:543px;width:226.5px;height:33px;background:#fff;border:1px solid #e3e3e3;border-radius:4px;box-sizing:border-box;"></div>
<div class="t" style="top:558.62px;font-size:18.4px;color:#b5b5b5;left:1303.8px;">X</div>
<div class="t" style="top:558.62px;font-size:18.4px;color:#222;right:2324.3px;">0</div>
<div class="t" style="top:558.62px;font-size:18.4px;color:#333;left:1599px;">Угол</div>
<div style="left:1716.5px;top:543px;width:88.5px;height:33px;background:#fff;border:1px solid #e3e3e3;border-radius:4px;box-sizing:border-box;"></div>
<div class="t" style="top:558.62px;font-size:18.4px;color:#222;right:2039.5px;">0</div>
<div style="left:1294px;top:587.8px;width:226.5px;height:32.4px;background:#fff;border:1px solid #e3e3e3;border-radius:4px;box-sizing:border-box;"></div>
<div class="t" style="top:603.12px;font-size:18.4px;color:#b5b5b5;left:1303.8px;">Y</div>
<div class="t" style="top:603.12px;font-size:18.4px;color:#222;right:2324.3px;">10</div>
<div class="t" style="top:652.62px;font-size:18.4px;color:#333;left:1294.7px;">Шрифт</div>
<div style="left:1400.5px;top:637px;width:144.1px;height:32.5px;background:#fff;border:1px solid #e3e3e3;border-radius:4px;box-sizing:border-box;"></div>
<div class="t" style="top:652.62px;font-size:18.4px;color:#333;left:1404px;">Windows</div>
<svg style="position:absolute;left:1521px;top:648px;" width="16" height="10" viewBox="0 0 16 10"><path d="M1 1H15L8 8Z" fill="#d0d0d0"/></svg>
<div style="left:1564px;top:637px;width:198px;height:32.5px;background:#fff;border:1px solid #e3e3e3;border-radius:4px;box-sizing:border-box;"></div>
<div class="t" style="top:652.62px;font-size:18.4px;color:#333;left:1569.5px;">Roboto</div>
<div style="left:1768.4px;top:637px;width:36.6px;height:32.5px;background:#fff;border:1px solid #e3e3e3;border-radius:4px;box-sizing:border-box;"></div>
<div class="t" style="top:656.62px;font-size:18.4px;color:#333;font-weight:700;left:1786.7px;transform:translateX(-50%);">..</div>
<div class="t" style="top:700.42px;font-size:18.4px;color:#333;left:1294.7px;">Высота</div>
<div style="left:1400.5px;top:684.8px;width:144.1px;height:32.4px;background:#fff;border:1px solid #e3e3e3;border-radius:4px;box-sizing:border-box;"></div>
<div class="t" style="top:700.42px;font-size:18.4px;color:#222;right:2300px;">10</div>
<div class="t" style="top:702.62px;font-size:18.4px;color:#333;left:1594.8px;">Кернинг</div>
<div style="left:1773.6px;top:693.9px;width:30.4px;height:19.4px;background:#adc3c1;border:1.5px solid #5e8f8b;border-radius:9.7px;box-sizing:border-box;"></div>
<div style="left:1774.6px;top:695.4px;width:16.4px;height:16.4px;background:#efefef;border-radius:50%;box-shadow:0 0 1px #777;"></div>
<div class="t" style="top:744.22px;font-size:18.4px;color:#333;left:1294.7px;">Ширина</div>
<div style="left:1400.5px;top:727.6px;width:144.1px;height:32.8px;background:#fff;border:1px solid #e3e3e3;border-radius:4px;box-sizing:border-box;"></div>
<div class="t" style="top:744.22px;font-size:18.4px;color:#222;right:2322px;">100</div>
<div class="t" style="top:744.22px;font-size:18.4px;color:#b5b5b5;right:2305px;">%</div>
<div style="left:1594.5px;top:735.9px;width:21px;height:21px;background:#fff;border:1.5px solid #23928e;border-radius:50%;box-sizing:border-box;"></div>
<div style="left:1599px;top:740.4px;width:12px;height:12px;background:#23928e;border-radius:50%;"></div>
<div class="t" style="top:744.22px;font-size:18.4px;color:#333;left:1628.3px;">Шаг</div>
<div style="left:1728.2px;top:727.6px;width:76.8px;height:32.8px;background:#fff;border:1px solid #e3e3e3;border-radius:4px;box-sizing:border-box;"></div>
<div class="t" style="top:744.22px;font-size:18.4px;color:#222;right:2039.5px;">4</div>
<div class="t" style="top:787.12px;font-size:18.4px;color:#333;left:1294.7px;">Межстр.</div>
<div style="left:1400.5px;top:770.8px;width:144.1px;height:32.4px;background:#fff;border:1px solid #e3e3e3;border-radius:4px;box-sizing:border-box;"></div>
<div class="t" style="top:787.12px;font-size:18.4px;color:#222;right:2300px;">0</div>
<div style="left:1594.5px;top:779.1px;width:21px;height:21px;background:#fff;border:1.3px solid #999;border-radius:50%;box-sizing:border-box;"></div>
<div class="t" style="top:787.12px;font-size:18.4px;color:#333;left:1628.3px;">Длина</div>
<div style="left:1728.2px;top:770.8px;width:76.8px;height:32.4px;background:#f3f3f3;border:1px solid #e3e3e3;border-radius:4px;box-sizing:border-box;"></div>
<div class="t" style="top:787.12px;font-size:18.4px;color:#555;right:2039.5px;">4</div>
<div style="left:1594.2px;top:818px;width:23.3px;height:22.5px;background:#fff;border:1px solid #c8c8c8;border-radius:2px;box-sizing:border-box;"></div>
<div class="t" style="top:828.12px;font-size:18.4px;color:#333;left:1628.3px;">Наклон</div>
<div style="left:1728.2px;top:814px;width:76.8px;height:32.4px;background:#f3f3f3;border:1px solid #e3e3e3;border-radius:4px;box-sizing:border-box;"></div>
<div class="t" style="top:830.12px;font-size:18.4px;color:#555;right:2039.5px;">90</div>
<div style="left:1294.4px;top:858.4px;width:23px;height:22px;background:#fff;border:1px solid #c8c8c8;border-radius:2px;box-sizing:border-box;"></div>
<div class="t" style="top:868.22px;font-size:18.4px;color:#333;left:1334.6px;">Установить по умолчанию</div>
<div style="left:1294.4px;top:917px;width:38px;height:38px;background:#fff;border:1px solid #cfcfcf;border-radius:50%;box-sizing:border-box;"></div>
<div class="t" style="top:936.21px;font-size:24.5px;color:#4a4a4a;left:1313.4px;transform:translateX(-50%);-webkit-text-stroke:0.5px #4a4a4a;">?</div>
<div style="left:1453.4px;top:916px;width:114.2px;height:39px;background:#fff;border:1px solid #c9c9c9;border-radius:4px;box-sizing:border-box;"></div>
<div class="t" style="top:935.62px;font-size:18.4px;color:#333;left:1510.5px;transform:translateX(-50%);">Да</div>
<div style="left:1573.4px;top:916px;width:114.9px;height:39px;background:#fff;border:1px solid #c9c9c9;border-radius:4px;box-sizing:border-box;"></div>
<div class="t" style="top:935.62px;font-size:18.4px;color:#333;left:1630.85px;transform:translateX(-50%);">Отмена</div>
<div style="left:1598px;top:945px;width:14.5px;height:1.3px;background:#333;"></div>
<div style="left:1693.5px;top:916px;width:114.8px;height:39px;background:#fff;border:1px solid #c9c9c9;border-radius:4px;box-sizing:border-box;"></div>
<div class="t" style="top:935.62px;font-size:18.4px;color:#a6a6a6;left:1750.9px;transform:translateX(-50%);">Применить</div>
<div style="left:1888.9px;top:175px;width:583.9px;height:444.2px;background:#fff;border-radius:10px;box-shadow:0 0 0 1px #adadad, 6px 6px 13px 4px rgba(0,0,0,0.27);"></div>
<div style="left:1888.9px;top:175px;width:583.9px;height:44px;background:#23928e;border-radius:10px 10px 0 0;"></div>
<div class="t" style="top:198.59px;font-size:18.5px;color:#fff;left:1899.8px;">Триангуляция поверхностей</div>
<svg style="position:absolute;left:2438.8px;top:189px;" width="16" height="16" viewBox="0 0 16 16"><path d="M1 1L15 15M15 1L1 15" stroke="#fff" stroke-width="1.6"/></svg>
<div class="t" style="top:251.87px;font-size:20px;color:#333;font-weight:700;left:1914.8px;">Исходные данные</div>
<div class="t" style="top:291.22px;font-size:18.4px;color:#333;left:1915.8px;">Имя объекта</div>
<div style="left:2189px;top:277.7px;width:260.2px;height:33.2px;background:#fff;border:1px solid #dcdcdc;border-radius:4px;box-sizing:border-box;"></div>
<div class="t" style="top:292.92px;font-size:18.4px;color:#333;left:2194.3px;">Сетки</div>
<div class="t" style="top:337.02px;font-size:18.4px;color:#333;left:1915.8px;">Поверхности</div>
<div class="t" style="top:337.62px;font-size:18.4px;color:#1f918b;font-weight:700;right:1712px;">0</div>
<div class="t" style="top:337.02px;font-size:18.4px;color:#333;left:2189px;">Точность</div>
<div style="left:2368px;top:322.5px;width:81.2px;height:33.1px;background:#fff;border:1px solid #dcdcdc;border-radius:4px;box-sizing:border-box;"></div>
<div class="t" style="top:338.62px;font-size:18.4px;color:#333;left:2373px;">0.1</div>
<div class="t" style="top:407.37px;font-size:20px;color:#333;font-weight:700;left:1914.8px;">Получено</div>
<div class="t" style="top:445.42px;font-size:18.4px;color:#333;left:1915.8px;">Сетки</div>
<div class="t" style="top:446.12px;font-size:18.4px;color:#1f918b;font-weight:700;right:1712px;">0</div>
<div class="t" style="top:445.42px;font-size:18.4px;color:#333;left:2189px;">Треугольников</div>
<div class="t" style="top:446.12px;font-size:18.4px;color:#1f918b;font-weight:700;right:1461.7px;">0</div>
<div style="left:1915.8px;top:499.9px;width:30.5px;height:18.9px;background:#adc3c1;border:1.5px solid #5e8f8b;border-radius:9.45px;box-sizing:border-box;"></div>
<div style="left:1916.8px;top:501.4px;width:15.9px;height:15.9px;background:#efefef;border-radius:50%;box-shadow:0 0 1px #777;"></div>
<div class="t" style="top:507.62px;font-size:18.4px;color:#333;left:1952.9px;">Удалить исходные</div>
<div style="left:1915.8px;top:561.2px;width:38.1px;height:38.1px;background:#fff;border:1px solid #cfcfcf;border-radius:50%;box-sizing:border-box;"></div>
<div class="t" style="top:580.46px;font-size:24.5px;color:#4a4a4a;left:1934.85px;transform:translateX(-50%);-webkit-text-stroke:0.5px #4a4a4a;">?</div>
<div style="left:2210.2px;top:559.5px;width:117.4px;height:39.2px;background:#fff;border:1px solid #c9c9c9;border-radius:4px;box-sizing:border-box;"></div>
<div class="t" style="top:579.02px;font-size:18.4px;color:#a6a6a6;left:2268.9px;transform:translateX(-50%);">Да</div>
<div style="left:2332.5px;top:559.5px;width:116.7px;height:39.2px;background:#fff;border:1px solid #c9c9c9;border-radius:4px;box-sizing:border-box;"></div>
<div class="t" style="top:579.02px;font-size:18.4px;color:#333;left:2390.85px;transform:translateX(-50%);">Отмена</div>
<div style="left:2358px;top:588px;width:14.5px;height:1.3px;background:#333;"></div>
<div style="left:2526px;top:175px;width:457.8px;height:785px;background:#fff;border-radius:10px;box-shadow:0 0 0 1px #adadad, 6px 6px 13px 4px rgba(0,0,0,0.27);"></div>
<div style="left:2526px;top:175px;width:457.8px;height:44px;background:#23928e;border-radius:10px 10px 0 0;"></div>
<div class="t" style="top:198.59px;font-size:18.5px;color:#fff;left:2536.8px;">Выбор плоскости сечения</div>
<svg style="position:absolute;left:2949.8px;top:189px;" width="16" height="16" viewBox="0 0 16 16"><path d="M1 1L15 15M15 1L1 15" stroke="#fff" stroke-width="1.6"/></svg>
<div class="t" style="top:260.82px;font-size:18.4px;color:#333;left:2554.2px;">Имя объекта:</div>
<div style="left:2723.5px;top:246.5px;width:230.4px;height:33.7px;background:#fff;border:1px solid #dcdcdc;border-radius:4px;box-sizing:border-box;"></div>
<div class="t" style="top:262.22px;font-size:18.4px;color:#333;left:2728.8px;">Сечение</div>
<div class="t" style="top:302.82px;font-size:18.4px;color:#333;left:2554.2px;">Точность аппроксимации</div>
<div style="left:2865.5px;top:288.5px;width:88.5px;height:32.5px;background:#fff;border:1px solid #dcdcdc;border-radius:4px;box-sizing:border-box;"></div>
<div class="t" style="top:304.12px;font-size:18.4px;color:#333;left:2870.5px;">0.01</div>
<div style="left:2559.7px;top:328.5px;width:30.4px;height:19.3px;background:#adc3c1;border:1.5px solid #5e8f8b;border-radius:9.65px;box-sizing:border-box;"></div>
<div style="left:2560.7px;top:330px;width:16.3px;height:16.3px;background:#efefef;border-radius:50%;box-shadow:0 0 1px #777;"></div>
<div class="t" style="top:335.92px;font-size:18.4px;color:#333;left:2602px;">Объединение кривых</div>
<div style="left:2865.5px;top:323.8px;width:88.5px;height:32.9px;background:#fff;border:1px solid #e3e3e3;border-radius:4px;box-sizing:border-box;"></div>
<div class="t" style="top:339.12px;font-size:18.4px;color:#6a6a6a;left:2870.5px;">0.01</div>
<div class="t" style="top:386.47px;font-size:20px;color:#333;font-weight:700;left:2554.2px;">Начало СК</div>
<div class="t" style="top:425.62px;font-size:18.4px;color:#333;left:2554.2px;">X</div>
<div style="left:2600.6px;top:411.4px;width:99.4px;height:32.6px;background:#fff;border:1px solid #dcdcdc;border-radius:4px;box-sizing:border-box;"></div>
<div class="t" style="top:427.62px;font-size:18.4px;color:#333;left:2605.9px;">0</div>
<div class="t" style="top:427.62px;font-size:18.4px;color:#333;left:2745.6px;">% размера по X</div>
<div style="left:2923px;top:419.7px;width:30.4px;height:18.5px;background:#adc3c1;border:1.5px solid #5e8f8b;border-radius:9.25px;box-sizing:border-box;"></div>
<div style="left:2924px;top:421.2px;width:15.5px;height:15.5px;background:#efefef;border-radius:50%;box-shadow:0 0 1px #777;"></div>
<div class="t" style="top:461.12px;font-size:18.4px;color:#333;left:2554.2px;">Y</div>
<div style="left:2600.6px;top:446.7px;width:99.4px;height:32.9px;background:#fff;border:1px solid #dcdcdc;border-radius:4px;box-sizing:border-box;"></div>
<div class="t" style="top:463.12px;font-size:18.4px;color:#333;left:2605.9px;">0</div>
<div class="t" style="top:463.12px;font-size:18.4px;color:#333;left:2745.6px;">% размера по Y</div>
<div style="left:2923px;top:454.7px;width:30.4px;height:18.8px;background:#adc3c1;border:1.5px solid #5e8f8b;border-radius:9.4px;box-sizing:border-box;"></div>
<div style="left:2924px;top:456.2px;width:15.8px;height:15.8px;background:#efefef;border-radius:50%;box-shadow:0 0 1px #777;"></div>
<div class="t" style="top:496.12px;font-size:18.4px;color:#333;left:2554.2px;">Z</div>
<div style="left:2600.6px;top:482.4px;width:99.4px;height:32.6px;background:#fff;border:1px solid #dcdcdc;border-radius:4px;box-sizing:border-box;"></div>
<div class="t" style="top:498.12px;font-size:18.4px;color:#333;left:2605.9px;">0</div>
<div class="t" style="top:498.12px;font-size:18.4px;color:#333;left:2745.6px;">% размера по Z</div>
<div style="left:2923px;top:490px;width:30.4px;height:19px;background:#adc3c1;border:1.5px solid #5e8f8b;border-radius:9.5px;box-sizing:border-box;"></div>
<div style="left:2924px;top:491.5px;width:16px;height:16px;background:#efefef;border-radius:50%;box-shadow:0 0 1px #777;"></div>
<div class="t" style="top:553.37px;font-size:20px;color:#333;font-weight:700;left:2554.5px;">Главные оси</div>
<div class="t" style="top:589.82px;font-size:18.4px;color:#333;left:2554.2px;">X</div>
<div style="left:2600.5px;top:577.8px;width:107.1px;height:32.1px;background:#fff;border:1px solid #dcdcdc;border-radius:4px;box-sizing:border-box;"></div>
<div class="t" style="top:592.82px;font-size:18.4px;color:#333;left:2605.3px;">1</div>
<div class="t" style="top:625.42px;font-size:18.4px;color:#333;left:2554.2px;">Y</div>
<div style="left:2600.5px;top:613px;width:107.1px;height:32.5px;background:#fff;border:1px solid #dcdcdc;border-radius:4px;box-sizing:border-box;"></div>
<div class="t" style="top:628.42px;font-size:18.4px;color:#333;left:2605.3px;">0</div>
<div class="t" style="top:660.42px;font-size:18.4px;color:#333;left:2554.2px;">Z</div>
<div style="left:2600.5px;top:648.7px;width:107.1px;height:32.7px;background:#fff;border:1px solid #dcdcdc;border-radius:4px;box-sizing:border-box;"></div>
<div class="t" style="top:663.42px;font-size:18.4px;color:#333;left:2605.3px;">0</div>
<div class="t" style="top:589.62px;font-size:18.4px;color:#333;left:2745px;">Оси</div>
<div style="left:2846.7px;top:577.8px;width:107.1px;height:32.7px;background:#fff;border:1px solid #b5b5b5;box-sizing:border-box;"></div>
<div style="left:2846.7px;top:577.8px;width:35.6px;height:32.7px;background:#23928e;"></div>
<div style="left:2917px;top:578px;width:1px;height:32px;background:#c8c8c8;"></div>
<div class="t" style="top:594.12px;font-size:18.4px;color:#fff;left:2864.5px;transform:translateX(-50%);">X</div>
<div class="t" style="top:594.12px;font-size:18.4px;color:#333;left:2900px;transform:translateX(-50%);">Y</div>
<div class="t" style="top:594.12px;font-size:18.4px;color:#333;left:2935.7px;transform:translateX(-50%);">Z</div>
<div class="t" style="top:625.42px;font-size:18.4px;color:#333;left:2745px;">Угол</div>
<div style="left:2883.9px;top:613px;width:69.9px;height:33px;background:#fff;border:1px solid #dcdcdc;border-radius:4px;box-sizing:border-box;"></div>
<div class="t" style="top:628.62px;font-size:18.4px;color:#333;left:2889px;">0</div>
<div class="t" style="top:722.77px;font-size:20px;color:#333;font-weight:700;left:2554.5px;">Результат</div>
<div class="t" style="top:762.02px;font-size:18.4px;color:#333;left:2554.5px;">Замкнутых кривых</div>
<div class="t" style="top:791.62px;font-size:18.4px;color:#333;left:2554.5px;">Незамкнутых кривых</div>
<div class="t" style="top:837.07px;font-size:20px;color:#333;font-weight:700;left:2554.5px;">Всего</div>
<div style="left:2552.9px;top:899px;width:37.5px;height:37.1px;background:#fff;border:1px solid #cfcfcf;border-radius:50%;box-sizing:border-box;"></div>
<div class="t" style="top:917.76px;font-size:24.5px;color:#4a4a4a;left:2571.65px;transform:translateX(-50%);-webkit-text-stroke:0.5px #4a4a4a;">?</div>
<div style="left:2717.4px;top:899px;width:116px;height:39.4px;background:#fff;border:1px solid #c9c9c9;border-radius:4px;box-sizing:border-box;"></div>
<div class="t" style="top:918.62px;font-size:18.4px;color:#333;left:2775.4px;transform:translateX(-50%);">Да</div>
<div style="left:2839.4px;top:899px;width:116.3px;height:39.4px;background:#fff;border:1px solid #c9c9c9;border-radius:4px;box-sizing:border-box;"></div>
<div class="t" style="top:918.62px;font-size:18.4px;color:#333;left:2897.55px;transform:translateX(-50%);">Отмена</div>
<div style="left:2864.5px;top:928px;width:14.5px;height:1.3px;background:#333;"></div>
<div style="left:3038.7px;top:176px;width:615px;height:486.7px;background:#fff;border-radius:10px;box-shadow:0 0 0 1px #adadad, 6px 6px 13px 4px rgba(0,0,0,0.27);"></div>
<div style="left:3038.7px;top:176px;width:615px;height:43px;background:#23928e;border-radius:10px 10px 0 0;"></div>
<div class="t" style="top:199.59px;font-size:18.5px;color:#fff;left:3048.7px;">Объединение кривых</div>
<svg style="position:absolute;left:3619.7px;top:190px;" width="16" height="16" viewBox="0 0 16 16"><path d="M1 1L15 15M15 1L1 15" stroke="#fff" stroke-width="1.6"/></svg>
<div class="t" style="top:261.32px;font-size:18.4px;color:#333;left:3063.8px;">Имя кривой:</div>
<div style="left:3327.7px;top:249.4px;width:299.8px;height:32.7px;background:#fff;border:1px solid #dcdcdc;border-radius:4px;box-sizing:border-box;"></div>
<div class="t" style="top:264.92px;font-size:18.4px;color:#333;left:3333px;">Объед. кривая</div>
<div style="left:3063.8px;top:298.2px;width:29.8px;height:19.1px;background:#adc3c1;border:1.5px solid #5e8f8b;border-radius:9.55px;box-sizing:border-box;"></div>
<div style="left:3064.8px;top:299.7px;width:16.1px;height:16.1px;background:#efefef;border-radius:50%;box-shadow:0 0 1px #777;"></div>
<div class="t" style="top:307.32px;font-size:18.4px;color:#333;left:3100.8px;">Удалять исходные</div>
<div style="left:3063.8px;top:334.1px;width:29.8px;height:19.1px;background:#adc3c1;border:1.5px solid #5e8f8b;border-radius:9.55px;box-sizing:border-box;"></div>
<div style="left:3064.8px;top:335.6px;width:16.1px;height:16.1px;background:#efefef;border-radius:50%;box-shadow:0 0 1px #777;"></div>
<div class="t" style="top:343.22px;font-size:18.4px;color:#333;left:3100.8px;">Преобразовать в сплайн</div>
<div class="t" style="top:304.42px;font-size:18.4px;color:#333;left:3333.5px;">Точность</div>
<div style="left:3522px;top:291px;width:105.5px;height:32.4px;background:#fff;border:1px solid #dcdcdc;border-radius:4px;box-sizing:border-box;"></div>
<div class="t" style="top:307.62px;font-size:18.4px;color:#333;left:3527.4px;">0.001</div>
<div class="t" style="top:340.32px;font-size:18.4px;color:#aaa;left:3333.5px;">Точность сплайна</div>
<div style="left:3522px;top:325.9px;width:105.5px;height:33.4px;background:#fff;border:1px solid #dcdcdc;border-radius:4px;box-sizing:border-box;"></div>
<div class="t" style="top:343.12px;font-size:18.4px;color:#333;left:3527.4px;">0.01</div>
<div class="t" style="top:403.37px;font-size:20px;color:#333;font-weight:700;left:3064.9px;">Выбрано кривых</div>
<div class="t" style="top:403.37px;font-size:20px;color:#333;font-weight:700;left:3332.4px;">Получено кривых</div>
<div class="t" style="top:446.22px;font-size:18.4px;color:#333;left:3064.9px;">Всего кривых</div>
<div class="t" style="top:448.22px;font-size:18.4px;color:#1f918b;font-weight:700;right:575.9px;">0</div>
<div class="t" style="top:481.12px;font-size:18.4px;color:#333;left:3064.9px;">Замкнутых</div>
<div class="t" style="top:483.12px;font-size:18.4px;color:#1f918b;font-weight:700;right:575.9px;">0</div>
<div class="t" style="top:517.02px;font-size:18.4px;color:#333;left:3064.9px;">Разомкнутых</div>
<div class="t" style="top:519.02px;font-size:18.4px;color:#1f918b;font-weight:700;right:575.9px;">0</div>
<div class="t" style="top:444.42px;font-size:18.4px;color:#333;left:3333.5px;">Без изменения</div>
<div class="t" style="top:447.42px;font-size:18.4px;color:#1f918b;font-weight:700;right:302.7px;">0</div>
<div class="t" style="top:481.12px;font-size:18.4px;color:#333;left:3333.5px;">Новых</div>
<div class="t" style="top:484.12px;font-size:18.4px;color:#1f918b;font-weight:700;right:302.7px;">0</div>
<div class="t" style="top:517.02px;font-size:18.4px;color:#333;left:3333.5px;">Замкнутых</div>
<div class="t" style="top:520.02px;font-size:18.4px;color:#1f918b;font-weight:700;right:302.7px;">0</div>
<div class="t" style="top:550.42px;font-size:18.4px;color:#333;left:3333.5px;">Разомкнутых</div>
<div class="t" style="top:553.42px;font-size:18.4px;color:#1f918b;font-weight:700;right:302.7px;">0</div>
<div style="left:3064.9px;top:598px;width:38.4px;height:38.5px;background:#fff;border:1px solid #cfcfcf;border-radius:50%;box-sizing:border-box;"></div>
<div class="t" style="top:617.46px;font-size:24.5px;color:#4a4a4a;left:3084.1px;transform:translateX(-50%);-webkit-text-stroke:0.5px #4a4a4a;">?</div>
<div style="left:3388.8px;top:598px;width:115.9px;height:39.6px;background:#fff;border:1px solid #c9c9c9;border-radius:4px;box-sizing:border-box;"></div>
<div class="t" style="top:616.82px;font-size:18.4px;color:#a6a6a6;left:3446.75px;transform:translateX(-50%);">Да</div>
<div style="left:3510.1px;top:598px;width:116.7px;height:39.6px;background:#fff;border:1px solid #c9c9c9;border-radius:4px;box-sizing:border-box;"></div>
<div class="t" style="top:616.82px;font-size:18.4px;color:#333;left:3568.45px;transform:translateX(-50%);">Отмена</div>
<div style="left:3535.5px;top:626px;width:14.5px;height:1.3px;background:#333;"></div>
<div style="left:185.5px;top:1212px;width:953.5px;height:471.4px;background:#fff;border-radius:10px;box-shadow:0 0 0 1px #adadad, 6px 6px 13px 4px rgba(0,0,0,0.27);"></div>
<div style="left:185.5px;top:1212px;width:953.5px;height:43.2px;background:#23928e;border-radius:10px 10px 0 0;"></div>
<div class="t" style="top:1235.59px;font-size:18.5px;color:#fff;left:197px;">Преобразования в пространстве</div>
<svg style="position:absolute;left:1105px;top:1226px;" width="16" height="16" viewBox="0 0 16 16"><path d="M1 1L15 15M15 1L1 15" stroke="#fff" stroke-width="1.6"/></svg>
<div style="left:185.5px;top:1299px;width:231.5px;height:384.4px;background:#efefef;border-radius:0 0 0 10px;"></div>
<div class="t" style="top:1276.07px;font-size:19.7px;color:#1e7f7b;left:211.4px;">Перенос</div>
<div class="t" style="top:1320.17px;font-size:19.7px;color:#333;left:211.4px;">Поворот</div>
<div class="t" style="top:1362.37px;font-size:19.7px;color:#333;left:211.4px;">Масштаб</div>
<div class="t" style="top:1405.57px;font-size:19.7px;color:#333;left:211.4px;">Симметрия</div>
<div class="t" style="top:1448.67px;font-size:19.7px;color:#333;left:211.4px;">Точка отсчета</div>
<div class="t" style="top:1491.87px;font-size:19.7px;color:#333;left:211.4px;">Система координат</div>
<div class="t" style="top:1535.07px;font-size:19.7px;color:#333;left:211.4px;">СК в СК</div>
<div class="t" style="top:1642.07px;font-size:19.7px;color:#333;left:211.4px;">Предпросмотр</div>
<div style="left:361px;top:1632.7px;width:30.7px;height:19.6px;background:#23928e;border-radius:9.8px;"></div>
<div style="left:374.1px;top:1634.7px;width:15.6px;height:15.6px;background:#fff;border-radius:50%;"></div>
<div class="t" style="top:1312.41px;font-size:19.3px;color:#333;font-weight:700;left:448.3px;">Ось</div>
<div class="t" style="top:1357.17px;font-size:19.7px;color:#333;left:448px;">X</div>
<div style="left:497.3px;top:1340.5px;width:92.2px;height:32.8px;background:#fff;border:1px solid #dcdcdc;border-radius:4px;box-sizing:border-box;"></div>
<div class="t" style="top:1358.17px;font-size:19.7px;color:#333;left:503.9px;">0</div>
<div class="t" style="top:1398.67px;font-size:19.7px;color:#333;left:448px;">Y</div>
<div style="left:497.3px;top:1382.3px;width:92.2px;height:32.8px;background:#fff;border:1px solid #dcdcdc;border-radius:4px;box-sizing:border-box;"></div>
<div class="t" style="top:1399.67px;font-size:19.7px;color:#333;left:503.9px;">0</div>
<div class="t" style="top:1440.77px;font-size:19.7px;color:#333;left:448px;">Z</div>
<div style="left:497.3px;top:1423.8px;width:92.2px;height:32.8px;background:#fff;border:1px solid #dcdcdc;border-radius:4px;box-sizing:border-box;"></div>
<div class="t" style="top:1441.77px;font-size:19.7px;color:#333;left:503.9px;">0</div>
<div class="t" style="top:1641.07px;font-size:19.7px;color:#333;left:448.3px;">Сделать копии</div>
<div style="left:605.8px;top:1631px;width:30.4px;height:19.6px;background:#adc3c1;border:1.5px solid #5e8f8b;border-radius:9.8px;box-sizing:border-box;"></div>
<div style="left:606.8px;top:1632.5px;width:16.6px;height:16.6px;background:#efefef;border-radius:50%;box-shadow:0 0 1px #777;"></div>
<div style="left:652.8px;top:1622px;width:68.3px;height:36.6px;background:#fff;border:1px solid #e3e3e3;border-radius:4px;box-sizing:border-box;"></div>
<div class="t" style="top:1639.17px;font-size:19.7px;color:#555;left:659px;">1</div>
<div style="left:772.3px;top:1622px;width:110.4px;height:36.6px;background:#fff;border:1px solid #c9c9c9;border-radius:4px;box-sizing:border-box;"></div>
<div class="t" style="top:1639.62px;font-size:18.4px;color:#a6a6a6;left:827.5px;transform:translateX(-50%);">Да</div>
<div style="left:891.4px;top:1622px;width:110.1px;height:36.6px;background:#fff;border:1px solid #c9c9c9;border-radius:4px;box-sizing:border-box;"></div>
<div class="t" style="top:1639.62px;font-size:18.4px;color:#333;left:946.45px;transform:translateX(-50%);">Закрыть</div>
<div style="left:911px;top:1649px;width:13px;height:1.3px;background:#333;"></div>
<div style="left:1009.5px;top:1622px;width:110.5px;height:36.6px;background:#fff;border:1px solid #c9c9c9;border-radius:4px;box-sizing:border-box;"></div>
<div class="t" style="top:1639.62px;font-size:18.4px;color:#a6a6a6;left:1064.75px;transform:translateX(-50%);">Применить</div>
<svg style="position:absolute;left:700px;top:1280px;" width="360" height="320" viewBox="0 0 360 320"><path d="M104 108.9L180.7 147.9L104 185.9L26.3 147.9Z" fill="#fdfdfd" stroke="#666" stroke-width="0.9"/><path d="M26.3 147.9L104 185.9L104 263.6L26.3 224.9Z" fill="#d6d6d6" stroke="#666" stroke-width="0.9"/><path d="M104 185.9L180.7 147.9L180.7 224.9L104 263.6Z" fill="#ababab" stroke="#666" stroke-width="0.9"/><path d="M257.7 15.6L335.4 54.7L257.7 92L180.7 54.7Z" fill="#fdfdfd" stroke="#666" stroke-width="0.9"/><path d="M180.7 54.7L257.7 92L257.7 169.3L180.7 131.3Z" fill="#d6d6d6" stroke="#666" stroke-width="0.9"/><path d="M257.7 92L335.4 54.7L335.4 131.3L257.7 169.3Z" fill="#ababab" stroke="#666" stroke-width="0.9"/><path d="M104 263.6L126 274.6 M146 284.6 L177.7 300.1 M180.7 301.6 L212.7 285.6 M226.7 279.1 L253.7 265.6 M257.7 263.6 L257.7 225.3 M257.7 208.3 L257.7 177.3" stroke="#23918d" stroke-width="1.6" fill="none"/><path d="M180.7 301.6L171.7 293.6L168.7 300.6Z" fill="#23918d"/><path d="M257.7 263.6L245.7 265.6L249.7 272.6Z" fill="#23918d"/><path d="M257.7 169.3L252.7 179.3L262.7 179.3Z" fill="#23918d"/></svg>
<div class="t" style="top:1562.11px;font-size:17px;color:#111;left:836.8px;transform:translateX(-50%);">X</div>
<div class="t" style="top:1564.11px;font-size:17px;color:#111;left:919.7px;transform:translateX(-50%);">Y</div>
<div class="t" style="top:1497.11px;font-size:17px;color:#111;left:957.7px;transform:translateX(-50%);">Z</div>
<div style="left:940px;top:1485px;width:35px;height:23px;background:transparent;"></div>
<div style="left:1193.6px;top:1211.5px;width:540.3px;height:497.8px;background:#fff;border-radius:10px;box-shadow:0 0 0 1px #adadad, 6px 6px 13px 4px rgba(0,0,0,0.27);"></div>
<div style="left:1193.6px;top:1211.5px;width:540.3px;height:43.1px;background:#23928e;border-radius:10px 10px 0 0;"></div>
<div class="t" style="top:1235.09px;font-size:18.5px;color:#fff;left:1205.1px;">Проекция внешних границ</div>
<svg style="position:absolute;left:1699.9px;top:1225.5px;" width="16" height="16" viewBox="0 0 16 16"><path d="M1 1L15 15M15 1L1 15" stroke="#fff" stroke-width="1.6"/></svg>
<div class="t" style="top:1289.92px;font-size:18.4px;color:#333;left:1228.5px;">Имя объекта:</div>
<div style="left:1455.9px;top:1275.4px;width:249.6px;height:33.1px;background:#fff;border:1px solid #dcdcdc;border-radius:4px;box-sizing:border-box;"></div>
<div class="t" style="top:1291.32px;font-size:18.4px;color:#333;left:1461.3px;">Кривые</div>
<div class="t" style="top:1336.22px;font-size:18.4px;color:#333;left:1228.5px;">Точность аппроксимации:</div>
<div style="left:1617.1px;top:1321.4px;width:88.4px;height:33.1px;background:#fff;border:1px solid #dcdcdc;border-radius:4px;box-sizing:border-box;"></div>
<div class="t" style="top:1338.22px;font-size:18.4px;color:#333;left:1622px;">0.01</div>
<div class="t" style="top:1371.42px;font-size:18.4px;color:#333;left:1228.5px;">Припуск</div>
<div style="left:1617.1px;top:1357px;width:88.4px;height:32.7px;background:#fff;border:1px solid #dcdcdc;border-radius:4px;box-sizing:border-box;"></div>
<div class="t" style="top:1373.42px;font-size:18.4px;color:#333;left:1622px;">0</div>
<div class="t" style="top:1407.32px;font-size:18.4px;color:#333;left:1228.5px;">Игнорировать стыки шириной</div>
<div style="left:1617.1px;top:1392.9px;width:88.4px;height:32.7px;background:#fff;border:1px solid #dcdcdc;border-radius:4px;box-sizing:border-box;"></div>
<div class="t" style="top:1409.32px;font-size:18.4px;color:#333;left:1622px;">0.001</div>
<div class="t" style="top:1467.87px;font-size:20px;color:#333;font-weight:700;left:1228.5px;">Выбрано</div>
<div class="t" style="top:1467.87px;font-size:20px;color:#333;font-weight:700;left:1462.7px;">Получено</div>
<div class="t" style="top:1505.42px;font-size:18.4px;color:#333;left:1228.5px;">Поверхности</div>
<div class="t" style="top:1507.42px;font-size:18.4px;color:#1f918b;font-weight:700;right:2431.6px;">0</div>
<div class="t" style="top:1537.72px;font-size:18.4px;color:#333;left:1228.5px;">Сетки</div>
<div class="t" style="top:1539.72px;font-size:18.4px;color:#1f918b;font-weight:700;right:2431.6px;">0</div>
<div class="t" style="top:1570.02px;font-size:18.4px;color:#333;left:1228.5px;">Кривых</div>
<div class="t" style="top:1572.02px;font-size:18.4px;color:#1f918b;font-weight:700;right:2431.6px;">0</div>
<div class="t" style="top:1600.62px;font-size:18.4px;color:#333;left:1228.5px;">Всего</div>
<div class="t" style="top:1602.62px;font-size:18.4px;color:#1f918b;font-weight:700;right:2431.6px;">0</div>
<div class="t" style="top:1505.42px;font-size:18.4px;color:#333;left:1462.7px;">Кривых</div>
<div class="t" style="top:1507.42px;font-size:18.4px;color:#1f918b;font-weight:700;right:2141px;">0</div>
<div class="t" style="top:1537.72px;font-size:18.4px;color:#333;left:1462.7px;">Объектов</div>
<div class="t" style="top:1539.72px;font-size:18.4px;color:#1f918b;font-weight:700;right:2141px;">0</div>
<div style="left:1233.2px;top:1649.7px;width:37.7px;height:37.7px;background:#fff;border:1px solid #cfcfcf;border-radius:50%;box-sizing:border-box;"></div>
<div class="t" style="top:1668.76px;font-size:24.5px;color:#4a4a4a;left:1252.05px;transform:translateX(-50%);-webkit-text-stroke:0.5px #4a4a4a;">?</div>
<div style="left:1468px;top:1649.7px;width:116.1px;height:38.8px;background:#fff;border:1px solid #c9c9c9;border-radius:4px;box-sizing:border-box;"></div>
<div class="t" style="top:1669.62px;font-size:18.4px;color:#a6a6a6;left:1526.05px;transform:translateX(-50%);">Да</div>
<div style="left:1589.5px;top:1649.7px;width:116px;height:38.8px;background:#fff;border:1px solid #c9c9c9;border-radius:4px;box-sizing:border-box;"></div>
<div class="t" style="top:1669.62px;font-size:18.4px;color:#333;left:1647.5px;transform:translateX(-50%);">Отмена</div>
<div style="left:1614.5px;top:1679px;width:14.5px;height:1.3px;background:#333;"></div>
<div style="left:1788px;top:1212px;width:1440.8px;height:675px;background:#fff;border-radius:10px;box-shadow:0 0 0 1px #adadad, 6px 6px 13px 4px rgba(0,0,0,0.27);"></div>
<div style="left:1788px;top:1212px;width:1440.8px;height:43.2px;background:#23928e;border-radius:10px 10px 0 0;"></div>
<div class="t" style="top:1235.59px;font-size:18.5px;color:#fff;left:1827.3px;">Список инструментов</div>
<svg style="position:absolute;left:3194.8px;top:1226px;" width="16" height="16" viewBox="0 0 16 16"><path d="M1 1L15 15M15 1L1 15" stroke="#fff" stroke-width="1.6"/></svg>
<svg style="position:absolute;left:1799px;top:1223px;" width="24" height="24" viewBox="0 0 24 24"><polygon points="12,1.5 21.5,7 21.5,17 12,22.5 2.5,17 2.5,7" fill="none" stroke="#2b2b2b" stroke-width="1.6"/><circle cx="12" cy="12" r="5.5" fill="#fb3131"/></svg>
<div style="left:2098.3px;top:1255.2px;width:5.5px;height:631.8px;background:#e6e6e6;"></div>
<svg style="position:absolute;left:1802px;top:1267px;" width="30" height="32" viewBox="0 0 30 32"><path d="M3 2H17L27 12V30H3Z M17 2V12H27" fill="none" stroke="#777" stroke-width="1.8" stroke-linejoin="round"/></svg>
<svg style="position:absolute;left:1849px;top:1267px;" width="38" height="32" viewBox="0 0 38 32"><path d="M2 30V3H11L14 6H30V12 M2 30L8 12H36L30 30Z" fill="none" stroke="#777" stroke-width="1.8" stroke-linejoin="round"/></svg>
<svg style="position:absolute;left:1905px;top:1265px;" width="30" height="34" viewBox="0 0 30 34"><path d="M2 6H28M11 6V2H19V6M5 6V30A2 2 0 0 0 7 32H23A2 2 0 0 0 25 30V6M10 11V27M15 11V27M20 11V27" fill="none" stroke="#999" stroke-width="1.8"/></svg>
<div style="left:1789px;top:1308.5px;width:309.3px;height:1px;background:#e8e8e8;"></div>
<div style="left:1796.4px;top:1317.4px;width:296.5px;height:28.8px;background:#d9d9d9;border:1px dotted #888;box-sizing:border-box;"></div>
<div style="left:1799.4px;top:1321.8px;width:19.5px;height:20px;background:#0a5ec4;border-radius:3px;"></div>
<svg style="position:absolute;left:1799.4px;top:1321.8px;" width="19.5" height="20" viewBox="0 0 19.5 20"><path d="M5 10.5L8.3 13.8L14.5 7" fill="none" stroke="#fff" stroke-width="1.4"/></svg>
<div class="t" style="top:1330.42px;font-size:18.4px;color:#111;left:1829px;">Все</div>
<div style="left:1827.3px;top:1350.9px;width:19.5px;height:20px;background:#0a5ec4;border-radius:3px;"></div>
<svg style="position:absolute;left:1827.3px;top:1350.9px;" width="19.5" height="20" viewBox="0 0 19.5 20"><path d="M5 10.5L8.3 13.8L14.5 7" fill="none" stroke="#fff" stroke-width="1.4"/></svg>
<div class="t" style="top:1359.52px;font-size:18.4px;color:#333;left:1856.6px;">Инструменты проекта</div>
<div style="left:1827.3px;top:1380px;width:19.5px;height:20px;background:#0a5ec4;border-radius:3px;"></div>
<div style="left:1833.3px;top:1389.5px;width:7.5px;height:1.2px;background:#fff;"></div>
<div class="t" style="top:1388.62px;font-size:18.4px;color:#333;left:1856.6px;">Персональные</div>
<div style="left:1804.1px;top:1412.6px;width:13.7px;height:13.7px;background:#f0f0f0;border:1px solid #b9b9c8;box-sizing:border-box;"></div>
<div style="left:1807.1px;top:1418.9px;width:7.7px;height:1.1px;background:#6a6a9a;"></div>
<div style="left:1827.3px;top:1409.1px;width:19.5px;height:20px;background:#0a5ec4;border-radius:3px;"></div>
<svg style="position:absolute;left:1827.3px;top:1409.1px;" width="19.5" height="20" viewBox="0 0 19.5 20"><path d="M5 10.5L8.3 13.8L14.5 7" fill="none" stroke="#fff" stroke-width="1.4"/></svg>
<div class="t" style="top:1417.72px;font-size:18.4px;color:#333;left:1856.6px;">Поставщики</div>
<div style="left:1855.1px;top:1438.2px;width:19.5px;height:20px;background:#0a5ec4;border-radius:3px;"></div>
<svg style="position:absolute;left:1855.1px;top:1438.2px;" width="19.5" height="20" viewBox="0 0 19.5 20"><path d="M5 10.5L8.3 13.8L14.5 7" fill="none" stroke="#fff" stroke-width="1.4"/></svg>
<div class="t" style="top:1446.82px;font-size:18.4px;color:#333;left:1884.5px;">sandvik</div>
<div style="left:1804.1px;top:1470.8px;width:13.7px;height:13.7px;background:#f0f0f0;border:1px solid #b9b9c8;box-sizing:border-box;"></div>
<div style="left:1807.1px;top:1477.1px;width:7.7px;height:1.1px;background:#6a6a9a;"></div>
<div style="left:1827.3px;top:1467.3px;width:19.5px;height:20px;background:#0a5ec4;border-radius:3px;"></div>
<svg style="position:absolute;left:1827.3px;top:1467.3px;" width="19.5" height="20" viewBox="0 0 19.5 20"><path d="M5 10.5L8.3 13.8L14.5 7" fill="none" stroke="#fff" stroke-width="1.4"/></svg>
<div class="t" style="top:1475.92px;font-size:18.4px;color:#333;left:1856.6px;">Примеры</div>
<div style="left:1855.1px;top:1496.4px;width:19.5px;height:20px;background:#0a5ec4;border-radius:3px;"></div>
<svg style="position:absolute;left:1855.1px;top:1496.4px;" width="19.5" height="20" viewBox="0 0 19.5 20"><path d="M5 10.5L8.3 13.8L14.5 7" fill="none" stroke="#fff" stroke-width="1.4"/></svg>
<div class="t" style="top:1505.02px;font-size:18.4px;color:#222;font-weight:700;left:1884.5px;">ToolKit</div>
<div style="left:1855.1px;top:1525.5px;width:19.5px;height:20px;background:#0a5ec4;border-radius:3px;"></div>
<svg style="position:absolute;left:1855.1px;top:1525.5px;" width="19.5" height="20" viewBox="0 0 19.5 20"><path d="M5 10.5L8.3 13.8L14.5 7" fill="none" stroke="#fff" stroke-width="1.4"/></svg>
<div class="t" style="top:1534.12px;font-size:18.4px;color:#333;left:1884.5px;">InchToolKit</div>
<div style="left:1855.1px;top:1555.3px;width:19.5px;height:20px;background:#0a5ec4;border-radius:3px;"></div>
<svg style="position:absolute;left:1855.1px;top:1555.3px;" width="19.5" height="20" viewBox="0 0 19.5 20"><path d="M5 10.5L8.3 13.8L14.5 7" fill="none" stroke="#fff" stroke-width="1.4"/></svg>
<div class="t" style="top:1563.92px;font-size:18.4px;color:#333;left:1884.5px;">Metric-Aluminium</div>
<div style="left:1855.1px;top:1584.7px;width:19.5px;height:20px;background:#0a5ec4;border-radius:3px;"></div>
<svg style="position:absolute;left:1855.1px;top:1584.7px;" width="19.5" height="20" viewBox="0 0 19.5 20"><path d="M5 10.5L8.3 13.8L14.5 7" fill="none" stroke="#fff" stroke-width="1.4"/></svg>
<div class="t" style="top:1593.32px;font-size:18.4px;color:#333;left:1884.5px;">Metric-Brass</div>
<div style="left:1855.1px;top:1613.8px;width:19.5px;height:20px;background:#0a5ec4;border-radius:3px;"></div>
<svg style="position:absolute;left:1855.1px;top:1613.8px;" width="19.5" height="20" viewBox="0 0 19.5 20"><path d="M5 10.5L8.3 13.8L14.5 7" fill="none" stroke="#fff" stroke-width="1.4"/></svg>
<div class="t" style="top:1622.42px;font-size:18.4px;color:#333;left:1884.5px;">Metric-Bronze</div>
<div style="left:1855.1px;top:1643.1px;width:19.5px;height:20px;background:#0a5ec4;border-radius:3px;"></div>
<svg style="position:absolute;left:1855.1px;top:1643.1px;" width="19.5" height="20" viewBox="0 0 19.5 20"><path d="M5 10.5L8.3 13.8L14.5 7" fill="none" stroke="#fff" stroke-width="1.4"/></svg>
<div class="t" style="top:1651.72px;font-size:18.4px;color:#333;left:1884.5px;">Metric-Copper</div>
<div style="left:1855.1px;top:1672.2px;width:19.5px;height:20px;background:#0a5ec4;border-radius:3px;"></div>
<svg style="position:absolute;left:1855.1px;top:1672.2px;" width="19.5" height="20" viewBox="0 0 19.5 20"><path d="M5 10.5L8.3 13.8L14.5 7" fill="none" stroke="#fff" stroke-width="1.4"/></svg>
<div class="t" style="top:1680.82px;font-size:18.4px;color:#333;left:1884.5px;">Metric-High Carbon St...</div>
<div style="left:1855.1px;top:1701.6px;width:19.5px;height:20px;background:#0a5ec4;border-radius:3px;"></div>
<svg style="position:absolute;left:1855.1px;top:1701.6px;" width="19.5" height="20" viewBox="0 0 19.5 20"><path d="M5 10.5L8.3 13.8L14.5 7" fill="none" stroke="#fff" stroke-width="1.4"/></svg>
<div class="t" style="top:1710.22px;font-size:18.4px;color:#333;left:1884.5px;">Metric-Low Carbon Steel</div>
<div style="left:1855.1px;top:1730.7px;width:19.5px;height:20px;background:#0a5ec4;border-radius:3px;"></div>
<svg style="position:absolute;left:1855.1px;top:1730.7px;" width="19.5" height="20" viewBox="0 0 19.5 20"><path d="M5 10.5L8.3 13.8L14.5 7" fill="none" stroke="#fff" stroke-width="1.4"/></svg>
<div class="t" style="top:1739.32px;font-size:18.4px;color:#333;left:1884.5px;">Metric-Plastics</div>
<div style="left:1855.1px;top:1759.8px;width:19.5px;height:20px;background:#0a5ec4;border-radius:3px;"></div>
<svg style="position:absolute;left:1855.1px;top:1759.8px;" width="19.5" height="20" viewBox="0 0 19.5 20"><path d="M5 10.5L8.3 13.8L14.5 7" fill="none" stroke="#fff" stroke-width="1.4"/></svg>
<div class="t" style="top:1768.42px;font-size:18.4px;color:#333;left:1884.5px;">Metric-Stainless Steel</div>
<div style="left:1855.1px;top:1789.1px;width:19.5px;height:20px;background:#0a5ec4;border-radius:3px;"></div>
<svg style="position:absolute;left:1855.1px;top:1789.1px;" width="19.5" height="20" viewBox="0 0 19.5 20"><path d="M5 10.5L8.3 13.8L14.5 7" fill="none" stroke="#fff" stroke-width="1.4"/></svg>
<div class="t" style="top:1797.72px;font-size:18.4px;color:#333;left:1884.5px;">Metric-Titanium</div>
<svg style="position:absolute;left:2117px;top:1266px;" width="32" height="33" viewBox="0 0 32 33"><path d="M2.5 1.5H17.5L16 9H4Z" fill="none" stroke="#777" stroke-width="1.6"/><path d="M4 9H16V27L10 32L4 27Z" fill="none" stroke="#777" stroke-width="1.6"/><path d="M4 15L16 10M4 22L16 17M5 28L16 24" stroke="#777" stroke-width="1.4"/><path d="M21 25H30M25.5 20.5V29.5" stroke="#666" stroke-width="1.6"/></svg>
<svg style="position:absolute;left:2166px;top:1266px;" width="34" height="33" viewBox="0 0 34 33"><path d="M4 1.5H14V20" fill="none" stroke="#777" stroke-width="1.6"/><path d="M4 1.5V20" stroke="#777" stroke-width="1.6"/><path d="M9.5 16L17 23.5L9.5 31L2 23.5Z" fill="#fff" stroke="#777" stroke-width="1.6"/><circle cx="9.5" cy="23.5" r="1.3" fill="#777"/><path d="M22 25.5H32M27 20.5V30.5" stroke="#666" stroke-width="1.6"/></svg>
<svg style="position:absolute;left:2221px;top:1268px;" width="29" height="31" viewBox="0 0 29 31"><rect x="1.5" y="1.5" width="19" height="19" rx="1.5" fill="none" stroke="#999" stroke-width="1.6"/><rect x="6.5" y="8.5" width="20" height="20" rx="1.5" fill="#dedede" stroke="#999" stroke-width="1.6"/></svg>
<svg style="position:absolute;left:2274px;top:1268px;" width="29" height="31" viewBox="0 0 29 31"><rect x="1.5" y="1.5" width="19" height="19" rx="1.5" fill="none" stroke="#999" stroke-width="1.6"/><rect x="6.5" y="8.5" width="20" height="20" rx="1.5" fill="#fff" stroke="#999" stroke-width="1.6"/><rect x="9.5" y="11.5" width="14" height="14" fill="#8e8e8e"/></svg>
<svg style="position:absolute;left:2326px;top:1266px;" width="29" height="33" viewBox="0 0 29 33"><path d="M1 4.5H28M11 1.5H18M4 4.5V29A2.5 2.5 0 0 0 6.5 31.5H22.5A2.5 2.5 0 0 0 25 29V4.5M8.5 9.5V25.5M14.5 9.5V25.5M20.5 9.5V25.5" fill="none" stroke="#999" stroke-width="1.8"/></svg>
<div style="left:2965px;top:1257.5px;width:50px;height:48.4px;background:#c6c6c6;border-radius:3px;"></div>
<div style="left:3124px;top:1257.5px;width:50px;height:48.4px;background:#c6c6c6;border-radius:3px;"></div>
<div style="left:3176px;top:1257.5px;width:51px;height:48.4px;background:#c6c6c6;border-radius:3px;"></div>
<svg style="position:absolute;left:2920px;top:1266px;" width="36" height="34" viewBox="0 0 36 34"><path d="M3 1.5H14L13 8H4Z M4 8H13V26L8.5 30L4 26Z" fill="none" stroke="#ccc" stroke-width="1.4"/><path d="M19 1.5H30V20" fill="none" stroke="#ccc" stroke-width="1.4"/><path d="M25 9L30 14L25 19L20 14Z" fill="none" stroke="#ccc" stroke-width="1.3"/><path d="M18 19L32 30L26 29L23 33Z" fill="#555"/><path d="M27 28L31 33" stroke="#555" stroke-width="1.5"/></svg>
<svg style="position:absolute;left:2972px;top:1265px;" width="38" height="34" viewBox="0 0 38 34"><path d="M3 1.5H15L14 8H4Z M4 8H14V27L9 32L4 27Z" fill="none" stroke="#555" stroke-width="1.6"/><path d="M4 14L14 10M4 21L14 17M5 28L14 24" stroke="#555" stroke-width="1.4"/><path d="M20 1.5H34M20 31H34M27 3V29M24 7L27 3L30 7M24 25L27 29L30 25" fill="none" stroke="#555" stroke-width="1.6"/></svg>
<svg style="position:absolute;left:3029px;top:1268px;" width="28" height="30" viewBox="0 0 28 30"><g fill="none" stroke="#555" stroke-width="1.6"><path d="M7 4H25M2 14H18M7 24H25"/><circle cx="4" cy="4" r="2.5"/><circle cx="22" cy="14" r="2.5"/><circle cx="4" cy="24" r="2.5"/></g></svg>
<div style="left:3069px;top:1264px;width:1px;height:36px;background:#ccc;"></div>
<svg style="position:absolute;left:3082px;top:1268px;" width="30" height="30" viewBox="0 0 30 30"><path d="M2 2H28V6L19 15V26L12 29V15L2 6Z" fill="none" stroke="#666" stroke-width="1.6"/></svg>
<svg style="position:absolute;left:3135px;top:1268px;" width="30" height="30" viewBox="0 0 30 30"><path d="M2 2H28V6L19 15V26L12 29V15L2 6Z" fill="#3e3e3e" stroke="#3e3e3e" stroke-width="1.4"/><path d="M16 8L24 5V9L17 14V27" fill="none" stroke="#c6c6c6" stroke-width="1.3"/></svg>
<svg style="position:absolute;left:3185px;top:1267px;" width="34" height="32" viewBox="0 0 34 32"><path d="M11 6V2H23V6" fill="none" stroke="#555" stroke-width="1.8"/><path d="M3 6H31L33 14L30 30H4L1 14Z" fill="none" stroke="#555" stroke-width="1.8"/><path d="M1 16H33" stroke="#555" stroke-width="1.6"/><rect x="9" y="13" width="4" height="6" fill="#fff" stroke="#555" stroke-width="1.4"/><rect x="21" y="13" width="4" height="6" fill="#fff" stroke="#555" stroke-width="1.4"/></svg>
<div style="left:2104px;top:1307.7px;width:1124px;height:1px;background:#e3e3e3;"></div>
<div style="left:2412.1px;top:1308.5px;width:1px;height:81.5px;background:#eeeeee;"></div>
<div style="left:2412.1px;top:1390px;width:1.5px;height:33.5px;background:#c9c9c9;"></div>
<div style="left:2496.5px;top:1308.5px;width:1px;height:81.5px;background:#eeeeee;"></div>
<div style="left:2496.5px;top:1390px;width:1.5px;height:33.5px;background:#c9c9c9;"></div>
<div style="left:2550.5px;top:1308.5px;width:1px;height:81.5px;background:#eeeeee;"></div>
<div style="left:2550.5px;top:1390px;width:1.5px;height:33.5px;background:#c9c9c9;"></div>
<div style="left:2604.3px;top:1308.5px;width:1px;height:81.5px;background:#eeeeee;"></div>
<div style="left:2604.3px;top:1390px;width:1.5px;height:33.5px;background:#c9c9c9;"></div>
<div style="left:2865.5px;top:1308.5px;width:1px;height:81.5px;background:#eeeeee;"></div>
<div style="left:2865.5px;top:1390px;width:1.5px;height:33.5px;background:#c9c9c9;"></div>
<div style="left:2942.3px;top:1308.5px;width:1px;height:81.5px;background:#eeeeee;"></div>
<div style="left:2942.3px;top:1390px;width:1.5px;height:33.5px;background:#c9c9c9;"></div>
<div style="left:3019.2px;top:1308.5px;width:1px;height:81.5px;background:#eeeeee;"></div>
<div style="left:3019.2px;top:1390px;width:1.5px;height:33.5px;background:#c9c9c9;"></div>
<div style="left:3096.1px;top:1308.5px;width:1px;height:81.5px;background:#eeeeee;"></div>
<div style="left:3096.1px;top:1390px;width:1.5px;height:33.5px;background:#c9c9c9;"></div>
<div style="left:3165.5px;top:1308.5px;width:1px;height:81.5px;background:#eeeeee;"></div>
<div style="left:3165.5px;top:1390px;width:1.5px;height:33.5px;background:#c9c9c9;"></div>
<div style="left:2104px;top:1354.8px;width:1124px;height:1px;background:#f0f0f0;"></div>
<div class="t" style="top:1330.32px;font-size:18.4px;color:#333;left:2258.4px;transform:translateX(-50%);">Название</div>
<div class="t" style="top:1330.32px;font-size:18.4px;color:#333;left:2416.8px;">ID</div>
<svg style="position:absolute;left:2521px;top:1328px;" width="15" height="9" viewBox="0 0 15 9"><path d="M0.5 8.5L7.5 0.5L14.5 8.5Z" fill="#777"/></svg>
<div class="t" style="top:1330.32px;font-size:18.4px;color:#333;left:2577.4px;transform:translateX(-50%);">M#</div>
<div class="t" style="top:1330.32px;font-size:18.4px;color:#333;left:2734.9px;transform:translateX(-50%);">Тип инструмента</div>
<div class="t" style="top:1330.32px;font-size:18.4px;color:#333;left:2903.9px;transform:translateX(-50%);">D</div>
<div class="t" style="top:1330.32px;font-size:18.4px;color:#333;left:2980.7px;transform:translateX(-50%);">R</div>
<div class="t" style="top:1330.32px;font-size:18.4px;color:#333;left:3057.6px;transform:translateX(-50%);">L</div>
<div class="t" style="top:1330.32px;font-size:18.4px;color:#333;left:3130.8px;transform:translateX(-50%);">Hand</div>
<div style="left:3166px;top:1310px;width:62px;height:90px;overflow:hidden;"><div class="t" style="left:5px;top:20.32px;font-size:18.4px;color:#333;">Источник</div></div>
<div class="t" style="top:1368.61px;font-size:17px;color:#444;left:2416.8px;">*</div>
<div class="t" style="top:1368.61px;font-size:17px;color:#444;left:2500.6px;">*</div>
<div class="t" style="top:1368.61px;font-size:17px;color:#444;left:2555px;">*</div>
<div class="t" style="top:1368.61px;font-size:17px;color:#444;left:2609px;">*</div>
<div class="t" style="top:1368.61px;font-size:17px;color:#444;left:2872.5px;">*</div>
<div class="t" style="top:1368.61px;font-size:17px;color:#444;left:2949.3px;">*</div>
<div class="t" style="top:1368.61px;font-size:17px;color:#444;left:3026.2px;">*</div>
<div class="t" style="top:1368.61px;font-size:17px;color:#444;left:3103px;">*</div>
<div class="t" style="top:1368.61px;font-size:17px;color:#444;left:3172.5px;">*</div>
<div style="left:3201.6px;top:1390px;width:26.1px;height:492px;background:#f0f0f0;"></div>
<div style="left:3207.9px;top:1416.5px;width:14px;height:25.7px;background:#8a8a8a;"></div>
<div style="left:2105px;top:1390px;width:1096.6px;height:33.5px;background:#e5e5e5;"></div>
<div style="left:2412.1px;top:1390px;width:1.5px;height:33.5px;background:#c9c9c9;"></div>
<div style="left:2496.5px;top:1390px;width:1.5px;height:33.5px;background:#c9c9c9;"></div>
<div style="left:2550.5px;top:1390px;width:1.5px;height:33.5px;background:#c9c9c9;"></div>
<div style="left:2604.3px;top:1390px;width:1.5px;height:33.5px;background:#c9c9c9;"></div>
<div style="left:2865.5px;top:1390px;width:1.5px;height:33.5px;background:#c9c9c9;"></div>
<div style="left:2942.3px;top:1390px;width:1.5px;height:33.5px;background:#c9c9c9;"></div>
<div style="left:3019.2px;top:1390px;width:1.5px;height:33.5px;background:#c9c9c9;"></div>
<div style="left:3096.1px;top:1390px;width:1.5px;height:33.5px;background:#c9c9c9;"></div>
<div style="left:3165.5px;top:1390px;width:1.5px;height:33.5px;background:#c9c9c9;"></div>
<div style="left:2106.2px;top:1400.2px;width:13.7px;height:13.7px;background:#f0f0f0;border:1px solid #b9b9c8;box-sizing:border-box;"></div>
<div style="left:2109.2px;top:1406.5px;width:7.7px;height:1.1px;background:#4a5fa0;"></div>
<svg style="position:absolute;left:2123px;top:1391px;" width="30" height="30" viewBox="0 0 30 30"><rect x="1" y="1" width="22" height="23" rx="3" fill="#d8ecfb" stroke="#55a8ee" stroke-width="1.4"/><rect x="5.5" y="5.5" width="23" height="23" rx="3" fill="#f0f7fd" stroke="#55a8ee" stroke-width="1.4"/><path d="M12 11.5C13 9 20 9 20.5 12C21 15 12 17 12 21.5H21" fill="none" stroke="#1f1fe8" stroke-width="1.6"/></svg>
<div class="t" style="top:1406.62px;font-size:18.4px;color:#1f4fa0;font-weight:700;left:2161.3px;">Инструменты проекта</div>
<div style="left:2121.5px;top:1434.2px;width:13.7px;height:13.7px;background:#f0f0f0;border:1px solid #b9b9c8;box-sizing:border-box;"></div>
<div style="left:2124.5px;top:1440.5px;width:7.7px;height:1.1px;background:#4a5fa0;"></div>
<div style="left:2127.8px;top:1437.2px;width:1.1px;height:7.7px;background:#4a5fa0;"></div>
<svg style="position:absolute;left:2147px;top:1431px;" width="14" height="21" viewBox="0 0 14 21"><defs><pattern id="mh" width="4" height="4" patternUnits="userSpaceOnUse" patternTransform="rotate(30)"><rect width="4" height="4" fill="#f3dfa0"/><path d="M0 0V4" stroke="#fbefc8" stroke-width="1.5"/></pattern></defs><rect x="1.5" y="1.5" width="11" height="18" fill="url(#mh)" stroke="#8a8a8a" stroke-width="1.6"/></svg>
<div style="left:2176.4px;top:1424.1px;width:233.6px;height:30px;overflow:hidden;"><div class="t" style="left:0;top:15.62px;font-size:18.4px;color:#333;">16mm Цилиндрическая ...</div></div>
<div style="left:2418.7px;top:1424.1px;width:75.3px;height:30px;overflow:hidden;"><div class="t" style="left:0;top:15.62px;font-size:18.4px;color:#333;">39</div></div>
<div style="left:2503.4px;top:1424.1px;width:44.6px;height:30px;overflow:hidden;"><div class="t" style="left:0;top:15.62px;font-size:18.4px;color:#333;">39</div></div>
<div style="left:2557px;top:1424.1px;width:45px;height:30px;overflow:hidden;"><div class="t" style="left:0;top:15.62px;font-size:18.4px;color:#333;">0</div></div>
<div style="left:2611.3px;top:1424.1px;width:251.7px;height:30px;overflow:hidden;"><div class="t" style="left:0;top:15.62px;font-size:18.4px;color:#333;">Цилиндрическая фреза</div></div>
<div style="left:2873.2px;top:1424.1px;width:66.8px;height:30px;overflow:hidden;"><div class="t" style="left:0;top:15.62px;font-size:18.4px;color:#333;">16</div></div>
<div style="left:2949.3px;top:1424.1px;width:67.7px;height:30px;overflow:hidden;"><div class="t" style="left:0;top:15.62px;font-size:18.4px;color:#333;">0</div></div>
<div style="left:3026.9px;top:1424.1px;width:67.1px;height:30px;overflow:hidden;"><div class="t" style="left:0;top:15.62px;font-size:18.4px;color:#333;">100</div></div>
<div style="left:3103px;top:1424.1px;width:60px;height:30px;overflow:hidden;"><div class="t" style="left:0;top:15.62px;font-size:18.4px;color:#333;">Right</div></div>
<div style="left:3172.5px;top:1424.1px;width:29.1px;height:30px;overflow:hidden;"><div class="t" style="left:0;top:15.62px;font-size:18.4px;color:#333;">Инструменты</div></div>
<div style="left:2106.2px;top:1468px;width:13.7px;height:13.7px;background:#f0f0f0;border:1px solid #b9b9c8;box-sizing:border-box;"></div>
<div style="left:2109.2px;top:1474.3px;width:7.7px;height:1.1px;background:#6a6a9a;"></div>
<svg style="position:absolute;left:2128px;top:1463px;" width="20" height="22" viewBox="0 0 20 22"><rect x="1.5" y="1.5" width="17" height="19" rx="2.5" fill="none" stroke="#555" stroke-width="2.2"/><path d="M2 8H18M2 14H18" stroke="#555" stroke-width="2"/></svg>
<div class="t" style="top:1474.22px;font-size:18.4px;color:#1f4fa0;font-weight:700;left:2161.3px;">ToolKit</div>
<div style="left:2104px;top:1491px;width:1097.6px;height:1px;background:#efefef;"></div>
<div style="left:0;top:0;width:3839px;height:1882px;overflow:hidden;"><svg style="position:absolute;left:2147px;top:1499.5px;" width="14" height="21" viewBox="0 0 14 21"><defs><pattern id="mh" width="4" height="4" patternUnits="userSpaceOnUse" patternTransform="rotate(30)"><rect width="4" height="4" fill="#f3dfa0"/><path d="M0 0V4" stroke="#fbefc8" stroke-width="1.5"/></pattern></defs><rect x="1.5" y="1.5" width="11" height="18" fill="url(#mh)" stroke="#8a8a8a" stroke-width="1.6"/></svg><div style="left:2176.4px;top:1492px;width:233.6px;height:30px;overflow:hidden;"><div class="t" style="left:0;top:15.62px;font-size:18.4px;color:#333;">1mm Cylindrical mill</div></div><div style="left:2418.7px;top:1492px;width:75.3px;height:30px;overflow:hidden;"><div class="t" style="left:0;top:15.62px;font-size:18.4px;color:#333;">1</div></div><div style="left:2503.4px;top:1492px;width:44.6px;height:30px;overflow:hidden;"><div class="t" style="left:0;top:15.62px;font-size:18.4px;color:#333;">1</div></div><div style="left:2557px;top:1492px;width:45px;height:30px;overflow:hidden;"><div class="t" style="left:0;top:15.62px;font-size:18.4px;color:#333;">0</div></div><div style="left:2611.3px;top:1492px;width:251.7px;height:30px;overflow:hidden;"><div class="t" style="left:0;top:15.62px;font-size:18.4px;color:#333;">Цилиндрическая фреза</div></div><div style="left:2873.2px;top:1492px;width:66.8px;height:30px;overflow:hidden;"><div class="t" style="left:0;top:15.62px;font-size:18.4px;color:#333;">1</div></div><div style="left:2949.3px;top:1492px;width:67.7px;height:30px;overflow:hidden;"><div class="t" style="left:0;top:15.62px;font-size:18.4px;color:#333;">0</div></div><div style="left:3026.9px;top:1492px;width:67.1px;height:30px;overflow:hidden;"><div class="t" style="left:0;top:15.62px;font-size:18.4px;color:#333;">3.5</div></div><div style="left:3103px;top:1492px;width:60px;height:30px;overflow:hidden;"><div class="t" style="left:0;top:15.62px;font-size:18.4px;color:#333;">Right</div></div><div style="left:3172.5px;top:1492px;width:29.1px;height:30px;overflow:hidden;"><div class="t" style="left:0;top:15.62px;font-size:18.4px;color:#333;">ToolKit</div></div><svg style="position:absolute;left:2144px;top:1531.4px;" width="18" height="24" viewBox="0 0 18 24"><rect x="5.5" y="1.5" width="10" height="19" fill="#c9c9c9" stroke="#777" stroke-width="1.6"/><rect x="1.5" y="15" width="6.5" height="6.5" fill="#fff6b0" stroke="#7a6a00" stroke-width="1.4"/></svg><div style="left:2176.4px;top:1525.4px;width:233.6px;height:30px;overflow:hidden;"><div class="t" style="left:0;top:15.62px;font-size:18.4px;color:#333;">CNMG-12 04 08-WF/DCL...</div></div><div style="left:2418.7px;top:1525.4px;width:75.3px;height:30px;overflow:hidden;"><div class="t" style="left:0;top:15.62px;font-size:18.4px;color:#333;">1001</div></div><div style="left:2503.4px;top:1525.4px;width:44.6px;height:30px;overflow:hidden;"><div class="t" style="left:0;top:15.62px;font-size:18.4px;color:#333;">1</div></div><div style="left:2557px;top:1525.4px;width:45px;height:30px;overflow:hidden;"><div class="t" style="left:0;top:15.62px;font-size:18.4px;color:#333;">0</div></div><div style="left:2611.3px;top:1525.4px;width:251.7px;height:30px;overflow:hidden;"><div class="t" style="left:0;top:15.62px;font-size:18.4px;color:#333;">Проходной</div></div><div style="left:2873.2px;top:1525.4px;width:66.8px;height:30px;overflow:hidden;"><div class="t" style="left:0;top:15.62px;font-size:18.4px;color:#333;">1</div></div><div style="left:2949.3px;top:1525.4px;width:67.7px;height:30px;overflow:hidden;"><div class="t" style="left:0;top:15.62px;font-size:18.4px;color:#333;">0.8</div></div><div style="left:3026.9px;top:1525.4px;width:67.1px;height:30px;overflow:hidden;"><div class="t" style="left:0;top:15.62px;font-size:18.4px;color:#333;">12</div></div><div style="left:3103px;top:1525.4px;width:60px;height:30px;overflow:hidden;"><div class="t" style="left:0;top:15.62px;font-size:18.4px;color:#333;">Right</div></div><div style="left:3172.5px;top:1525.4px;width:29.1px;height:30px;overflow:hidden;"><div class="t" style="left:0;top:15.62px;font-size:18.4px;color:#333;">ToolKit</div></div><svg style="position:absolute;left:2147px;top:1566.5px;" width="14" height="21" viewBox="0 0 14 21"><defs><pattern id="mh" width="4" height="4" patternUnits="userSpaceOnUse" patternTransform="rotate(30)"><rect width="4" height="4" fill="#f3dfa0"/><path d="M0 0V4" stroke="#fbefc8" stroke-width="1.5"/></pattern></defs><rect x="1.5" y="1.5" width="11" height="18" fill="url(#mh)" stroke="#8a8a8a" stroke-width="1.6"/></svg><div style="left:2176.4px;top:1559px;width:233.6px;height:30px;overflow:hidden;"><div class="t" style="left:0;top:15.62px;font-size:18.4px;color:#333;">2mm Cylindrical mill</div></div><div style="left:2418.7px;top:1559px;width:75.3px;height:30px;overflow:hidden;"><div class="t" style="left:0;top:15.62px;font-size:18.4px;color:#333;">2</div></div><div style="left:2503.4px;top:1559px;width:44.6px;height:30px;overflow:hidden;"><div class="t" style="left:0;top:15.62px;font-size:18.4px;color:#333;">2</div></div><div style="left:2557px;top:1559px;width:45px;height:30px;overflow:hidden;"><div class="t" style="left:0;top:15.62px;font-size:18.4px;color:#333;">0</div></div><div style="left:2611.3px;top:1559px;width:251.7px;height:30px;overflow:hidden;"><div class="t" style="left:0;top:15.62px;font-size:18.4px;color:#333;">Цилиндрическая фреза</div></div><div style="left:2873.2px;top:1559px;width:66.8px;height:30px;overflow:hidden;"><div class="t" style="left:0;top:15.62px;font-size:18.4px;color:#333;">2</div></div><div style="left:2949.3px;top:1559px;width:67.7px;height:30px;overflow:hidden;"><div class="t" style="left:0;top:15.62px;font-size:18.4px;color:#333;">0</div></div><div style="left:3026.9px;top:1559px;width:67.1px;height:30px;overflow:hidden;"><div class="t" style="left:0;top:15.62px;font-size:18.4px;color:#333;">7</div></div><div style="left:3103px;top:1559px;width:60px;height:30px;overflow:hidden;"><div class="t" style="left:0;top:15.62px;font-size:18.4px;color:#333;">Right</div></div><div style="left:3172.5px;top:1559px;width:29.1px;height:30px;overflow:hidden;"><div class="t" style="left:0;top:15.62px;font-size:18.4px;color:#333;">ToolKit</div></div><svg style="position:absolute;left:2144px;top:1599px;" width="18" height="24" viewBox="0 0 18 24"><rect x="5.5" y="1.5" width="10" height="19" fill="#c9c9c9" stroke="#777" stroke-width="1.6"/><rect x="1.5" y="15" width="6.5" height="6.5" fill="#fff6b0" stroke="#7a6a00" stroke-width="1.4"/></svg><div style="left:2176.4px;top:1593px;width:233.6px;height:30px;overflow:hidden;"><div class="t" style="left:0;top:15.62px;font-size:18.4px;color:#333;">DCLNL-2020K-12/CNMG-...</div></div><div style="left:2418.7px;top:1593px;width:75.3px;height:30px;overflow:hidden;"><div class="t" style="left:0;top:15.62px;font-size:18.4px;color:#333;">1002</div></div><div style="left:2503.4px;top:1593px;width:44.6px;height:30px;overflow:hidden;"><div class="t" style="left:0;top:15.62px;font-size:18.4px;color:#333;">2</div></div><div style="left:2557px;top:1593px;width:45px;height:30px;overflow:hidden;"><div class="t" style="left:0;top:15.62px;font-size:18.4px;color:#333;">0</div></div><div style="left:2611.3px;top:1593px;width:251.7px;height:30px;overflow:hidden;"><div class="t" style="left:0;top:15.62px;font-size:18.4px;color:#333;">Проходной</div></div><div style="left:2873.2px;top:1593px;width:66.8px;height:30px;overflow:hidden;"><div class="t" style="left:0;top:15.62px;font-size:18.4px;color:#333;">2</div></div><div style="left:2949.3px;top:1593px;width:67.7px;height:30px;overflow:hidden;"><div class="t" style="left:0;top:15.62px;font-size:18.4px;color:#333;">0.4</div></div><div style="left:3026.9px;top:1593px;width:67.1px;height:30px;overflow:hidden;"><div class="t" style="left:0;top:15.62px;font-size:18.4px;color:#333;">12</div></div><div style="left:3103px;top:1593px;width:60px;height:30px;overflow:hidden;"><div class="t" style="left:0;top:15.62px;font-size:18.4px;color:#333;">Left</div></div><div style="left:3172.5px;top:1593px;width:29.1px;height:30px;overflow:hidden;"><div class="t" style="left:0;top:15.62px;font-size:18.4px;color:#333;">ToolKit</div></div><svg style="position:absolute;left:2147px;top:1634px;" width="14" height="21" viewBox="0 0 14 21"><defs><pattern id="mh" width="4" height="4" patternUnits="userSpaceOnUse" patternTransform="rotate(30)"><rect width="4" height="4" fill="#f3dfa0"/><path d="M0 0V4" stroke="#fbefc8" stroke-width="1.5"/></pattern></defs><rect x="1.5" y="1.5" width="11" height="18" fill="url(#mh)" stroke="#8a8a8a" stroke-width="1.6"/></svg><div style="left:2176.4px;top:1626.5px;width:233.6px;height:30px;overflow:hidden;"><div class="t" style="left:0;top:15.62px;font-size:18.4px;color:#333;">3mm Cylindrical mill</div></div><div style="left:2418.7px;top:1626.5px;width:75.3px;height:30px;overflow:hidden;"><div class="t" style="left:0;top:15.62px;font-size:18.4px;color:#333;">3</div></div><div style="left:2503.4px;top:1626.5px;width:44.6px;height:30px;overflow:hidden;"><div class="t" style="left:0;top:15.62px;font-size:18.4px;color:#333;">3</div></div><div style="left:2557px;top:1626.5px;width:45px;height:30px;overflow:hidden;"><div class="t" style="left:0;top:15.62px;font-size:18.4px;color:#333;">0</div></div><div style="left:2611.3px;top:1626.5px;width:251.7px;height:30px;overflow:hidden;"><div class="t" style="left:0;top:15.62px;font-size:18.4px;color:#333;">Цилиндрическая фреза</div></div><div style="left:2873.2px;top:1626.5px;width:66.8px;height:30px;overflow:hidden;"><div class="t" style="left:0;top:15.62px;font-size:18.4px;color:#333;">3</div></div><div style="left:2949.3px;top:1626.5px;width:67.7px;height:30px;overflow:hidden;"><div class="t" style="left:0;top:15.62px;font-size:18.4px;color:#333;">0</div></div><div style="left:3026.9px;top:1626.5px;width:67.1px;height:30px;overflow:hidden;"><div class="t" style="left:0;top:15.62px;font-size:18.4px;color:#333;">16.5</div></div><div style="left:3103px;top:1626.5px;width:60px;height:30px;overflow:hidden;"><div class="t" style="left:0;top:15.62px;font-size:18.4px;color:#333;">Right</div></div><div style="left:3172.5px;top:1626.5px;width:29.1px;height:30px;overflow:hidden;"><div class="t" style="left:0;top:15.62px;font-size:18.4px;color:#333;">ToolKit</div></div><svg style="position:absolute;left:2144px;top:1666.4px;" width="18" height="24" viewBox="0 0 18 24"><rect x="5.5" y="1.5" width="10" height="19" fill="#c9c9c9" stroke="#777" stroke-width="1.6"/><rect x="1.5" y="15" width="6.5" height="6.5" fill="#fff6b0" stroke="#7a6a00" stroke-width="1.4"/></svg><div style="left:2176.4px;top:1660.4px;width:233.6px;height:30px;overflow:hidden;"><div class="t" style="left:0;top:15.62px;font-size:18.4px;color:#333;">DCLNR-2525M-12/CNMG-...</div></div><div style="left:2418.7px;top:1660.4px;width:75.3px;height:30px;overflow:hidden;"><div class="t" style="left:0;top:15.62px;font-size:18.4px;color:#333;">1003</div></div><div style="left:2503.4px;top:1660.4px;width:44.6px;height:30px;overflow:hidden;"><div class="t" style="left:0;top:15.62px;font-size:18.4px;color:#333;">3</div></div><div style="left:2557px;top:1660.4px;width:45px;height:30px;overflow:hidden;"><div class="t" style="left:0;top:15.62px;font-size:18.4px;color:#333;">0</div></div><div style="left:2611.3px;top:1660.4px;width:251.7px;height:30px;overflow:hidden;"><div class="t" style="left:0;top:15.62px;font-size:18.4px;color:#333;">Проходной</div></div><div style="left:2873.2px;top:1660.4px;width:66.8px;height:30px;overflow:hidden;"><div class="t" style="left:0;top:15.62px;font-size:18.4px;color:#333;">1</div></div><div style="left:2949.3px;top:1660.4px;width:67.7px;height:30px;overflow:hidden;"><div class="t" style="left:0;top:15.62px;font-size:18.4px;color:#333;">0.4</div></div><div style="left:3026.9px;top:1660.4px;width:67.1px;height:30px;overflow:hidden;"><div class="t" style="left:0;top:15.62px;font-size:18.4px;color:#333;">12</div></div><div style="left:3103px;top:1660.4px;width:60px;height:30px;overflow:hidden;"><div class="t" style="left:0;top:15.62px;font-size:18.4px;color:#333;">Right</div></div><div style="left:3172.5px;top:1660.4px;width:29.1px;height:30px;overflow:hidden;"><div class="t" style="left:0;top:15.62px;font-size:18.4px;color:#333;">ToolKit</div></div><svg style="position:absolute;left:2147px;top:1701.9px;" width="14" height="21" viewBox="0 0 14 21"><defs><pattern id="mh" width="4" height="4" patternUnits="userSpaceOnUse" patternTransform="rotate(30)"><rect width="4" height="4" fill="#f3dfa0"/><path d="M0 0V4" stroke="#fbefc8" stroke-width="1.5"/></pattern></defs><rect x="1.5" y="1.5" width="11" height="18" fill="url(#mh)" stroke="#8a8a8a" stroke-width="1.6"/></svg><div style="left:2176.4px;top:1694.4px;width:233.6px;height:30px;overflow:hidden;"><div class="t" style="left:0;top:15.62px;font-size:18.4px;color:#333;">4mm Cylindrical mill</div></div><div style="left:2418.7px;top:1694.4px;width:75.3px;height:30px;overflow:hidden;"><div class="t" style="left:0;top:15.62px;font-size:18.4px;color:#333;">4</div></div><div style="left:2503.4px;top:1694.4px;width:44.6px;height:30px;overflow:hidden;"><div class="t" style="left:0;top:15.62px;font-size:18.4px;color:#333;">4</div></div><div style="left:2557px;top:1694.4px;width:45px;height:30px;overflow:hidden;"><div class="t" style="left:0;top:15.62px;font-size:18.4px;color:#333;">0</div></div><div style="left:2611.3px;top:1694.4px;width:251.7px;height:30px;overflow:hidden;"><div class="t" style="left:0;top:15.62px;font-size:18.4px;color:#333;">Цилиндрическая фреза</div></div><div style="left:2873.2px;top:1694.4px;width:66.8px;height:30px;overflow:hidden;"><div class="t" style="left:0;top:15.62px;font-size:18.4px;color:#333;">4</div></div><div style="left:2949.3px;top:1694.4px;width:67.7px;height:30px;overflow:hidden;"><div class="t" style="left:0;top:15.62px;font-size:18.4px;color:#333;">0</div></div><div style="left:3026.9px;top:1694.4px;width:67.1px;height:30px;overflow:hidden;"><div class="t" style="left:0;top:15.62px;font-size:18.4px;color:#333;">14</div></div><div style="left:3103px;top:1694.4px;width:60px;height:30px;overflow:hidden;"><div class="t" style="left:0;top:15.62px;font-size:18.4px;color:#333;">Right</div></div><div style="left:3172.5px;top:1694.4px;width:29.1px;height:30px;overflow:hidden;"><div class="t" style="left:0;top:15.62px;font-size:18.4px;color:#333;">ToolKit</div></div><svg style="position:absolute;left:2144px;top:1734.4px;" width="18" height="24" viewBox="0 0 18 24"><rect x="5.5" y="1.5" width="10" height="19" fill="#c9c9c9" stroke="#777" stroke-width="1.6"/><rect x="1.5" y="15" width="6.5" height="6.5" fill="#fff6b0" stroke="#7a6a00" stroke-width="1.4"/></svg><div style="left:2176.4px;top:1728.4px;width:233.6px;height:30px;overflow:hidden;"><div class="t" style="left:0;top:15.62px;font-size:18.4px;color:#333;">DCLNL-2525M-12/CNMG-...</div></div><div style="left:2418.7px;top:1728.4px;width:75.3px;height:30px;overflow:hidden;"><div class="t" style="left:0;top:15.62px;font-size:18.4px;color:#333;">1004</div></div><div style="left:2503.4px;top:1728.4px;width:44.6px;height:30px;overflow:hidden;"><div class="t" style="left:0;top:15.62px;font-size:18.4px;color:#333;">4</div></div><div style="left:2557px;top:1728.4px;width:45px;height:30px;overflow:hidden;"><div class="t" style="left:0;top:15.62px;font-size:18.4px;color:#333;">0</div></div><div style="left:2611.3px;top:1728.4px;width:251.7px;height:30px;overflow:hidden;"><div class="t" style="left:0;top:15.62px;font-size:18.4px;color:#333;">Проходной</div></div><div style="left:2873.2px;top:1728.4px;width:66.8px;height:30px;overflow:hidden;"><div class="t" style="left:0;top:15.62px;font-size:18.4px;color:#333;">2</div></div><div style="left:2949.3px;top:1728.4px;width:67.7px;height:30px;overflow:hidden;"><div class="t" style="left:0;top:15.62px;font-size:18.4px;color:#333;">0.4</div></div><div style="left:3026.9px;top:1728.4px;width:67.1px;height:30px;overflow:hidden;"><div class="t" style="left:0;top:15.62px;font-size:18.4px;color:#333;">12</div></div><div style="left:3103px;top:1728.4px;width:60px;height:30px;overflow:hidden;"><div class="t" style="left:0;top:15.62px;font-size:18.4px;color:#333;">Left</div></div><div style="left:3172.5px;top:1728.4px;width:29.1px;height:30px;overflow:hidden;"><div class="t" style="left:0;top:15.62px;font-size:18.4px;color:#333;">ToolKit</div></div><svg style="position:absolute;left:2147px;top:1769.3px;" width="14" height="21" viewBox="0 0 14 21"><defs><pattern id="mh" width="4" height="4" patternUnits="userSpaceOnUse" patternTransform="rotate(30)"><rect width="4" height="4" fill="#f3dfa0"/><path d="M0 0V4" stroke="#fbefc8" stroke-width="1.5"/></pattern></defs><rect x="1.5" y="1.5" width="11" height="18" fill="url(#mh)" stroke="#8a8a8a" stroke-width="1.6"/></svg><div style="left:2176.4px;top:1761.8px;width:233.6px;height:30px;overflow:hidden;"><div class="t" style="left:0;top:15.62px;font-size:18.4px;color:#333;">5mm Cylindrical mill</div></div><div style="left:2418.7px;top:1761.8px;width:75.3px;height:30px;overflow:hidden;"><div class="t" style="left:0;top:15.62px;font-size:18.4px;color:#333;">5</div></div><div style="left:2503.4px;top:1761.8px;width:44.6px;height:30px;overflow:hidden;"><div class="t" style="left:0;top:15.62px;font-size:18.4px;color:#333;">5</div></div><div style="left:2557px;top:1761.8px;width:45px;height:30px;overflow:hidden;"><div class="t" style="left:0;top:15.62px;font-size:18.4px;color:#333;">0</div></div><div style="left:2611.3px;top:1761.8px;width:251.7px;height:30px;overflow:hidden;"><div class="t" style="left:0;top:15.62px;font-size:18.4px;color:#333;">Цилиндрическая фреза</div></div><div style="left:2873.2px;top:1761.8px;width:66.8px;height:30px;overflow:hidden;"><div class="t" style="left:0;top:15.62px;font-size:18.4px;color:#333;">5</div></div><div style="left:2949.3px;top:1761.8px;width:67.7px;height:30px;overflow:hidden;"><div class="t" style="left:0;top:15.62px;font-size:18.4px;color:#333;">0</div></div><div style="left:3026.9px;top:1761.8px;width:67.1px;height:30px;overflow:hidden;"><div class="t" style="left:0;top:15.62px;font-size:18.4px;color:#333;">17.5</div></div><div style="left:3103px;top:1761.8px;width:60px;height:30px;overflow:hidden;"><div class="t" style="left:0;top:15.62px;font-size:18.4px;color:#333;">Right</div></div><div style="left:3172.5px;top:1761.8px;width:29.1px;height:30px;overflow:hidden;"><div class="t" style="left:0;top:15.62px;font-size:18.4px;color:#333;">ToolKit</div></div><svg style="position:absolute;left:2144px;top:1801.8px;" width="18" height="24" viewBox="0 0 18 24"><rect x="5.5" y="1.5" width="10" height="19" fill="#c9c9c9" stroke="#777" stroke-width="1.6"/><rect x="1.5" y="15" width="6.5" height="6.5" fill="#fff6b0" stroke="#7a6a00" stroke-width="1.4"/></svg><div style="left:2176.4px;top:1795.8px;width:233.6px;height:30px;overflow:hidden;"><div class="t" style="left:0;top:15.62px;font-size:18.4px;color:#333;">DDJNR-2020K-15/DNMX-...</div></div><div style="left:2418.7px;top:1795.8px;width:75.3px;height:30px;overflow:hidden;"><div class="t" style="left:0;top:15.62px;font-size:18.4px;color:#333;">1005</div></div><div style="left:2503.4px;top:1795.8px;width:44.6px;height:30px;overflow:hidden;"><div class="t" style="left:0;top:15.62px;font-size:18.4px;color:#333;">5</div></div><div style="left:2557px;top:1795.8px;width:45px;height:30px;overflow:hidden;"><div class="t" style="left:0;top:15.62px;font-size:18.4px;color:#333;">0</div></div><div style="left:2611.3px;top:1795.8px;width:251.7px;height:30px;overflow:hidden;"><div class="t" style="left:0;top:15.62px;font-size:18.4px;color:#333;">Проходной</div></div><div style="left:2873.2px;top:1795.8px;width:66.8px;height:30px;overflow:hidden;"><div class="t" style="left:0;top:15.62px;font-size:18.4px;color:#333;">1</div></div><div style="left:2949.3px;top:1795.8px;width:67.7px;height:30px;overflow:hidden;"><div class="t" style="left:0;top:15.62px;font-size:18.4px;color:#333;">0.4</div></div><div style="left:3026.9px;top:1795.8px;width:67.1px;height:30px;overflow:hidden;"><div class="t" style="left:0;top:15.62px;font-size:18.4px;color:#333;">12</div></div><div style="left:3103px;top:1795.8px;width:60px;height:30px;overflow:hidden;"><div class="t" style="left:0;top:15.62px;font-size:18.4px;color:#333;">Right</div></div><div style="left:3172.5px;top:1795.8px;width:29.1px;height:30px;overflow:hidden;"><div class="t" style="left:0;top:15.62px;font-size:18.4px;color:#333;">ToolKit</div></div><svg style="position:absolute;left:2147px;top:1837.2px;" width="14" height="21" viewBox="0 0 14 21"><defs><pattern id="mh" width="4" height="4" patternUnits="userSpaceOnUse" patternTransform="rotate(30)"><rect width="4" height="4" fill="#f3dfa0"/><path d="M0 0V4" stroke="#fbefc8" stroke-width="1.5"/></pattern></defs><rect x="1.5" y="1.5" width="11" height="18" fill="url(#mh)" stroke="#8a8a8a" stroke-width="1.6"/></svg><div style="left:2176.4px;top:1829.7px;width:233.6px;height:30px;overflow:hidden;"><div class="t" style="left:0;top:15.62px;font-size:18.4px;color:#333;">6mm Cylindrical mill</div></div><div style="left:2418.7px;top:1829.7px;width:75.3px;height:30px;overflow:hidden;"><div class="t" style="left:0;top:15.62px;font-size:18.4px;color:#333;">6</div></div><div style="left:2503.4px;top:1829.7px;width:44.6px;height:30px;overflow:hidden;"><div class="t" style="left:0;top:15.62px;font-size:18.4px;color:#333;">6</div></div><div style="left:2557px;top:1829.7px;width:45px;height:30px;overflow:hidden;"><div class="t" style="left:0;top:15.62px;font-size:18.4px;color:#333;">0</div></div><div style="left:2611.3px;top:1829.7px;width:251.7px;height:30px;overflow:hidden;"><div class="t" style="left:0;top:15.62px;font-size:18.4px;color:#333;">Цилиндрическая фреза</div></div><div style="left:2873.2px;top:1829.7px;width:66.8px;height:30px;overflow:hidden;"><div class="t" style="left:0;top:15.62px;font-size:18.4px;color:#333;">6</div></div><div style="left:2949.3px;top:1829.7px;width:67.7px;height:30px;overflow:hidden;"><div class="t" style="left:0;top:15.62px;font-size:18.4px;color:#333;">0</div></div><div style="left:3026.9px;top:1829.7px;width:67.1px;height:30px;overflow:hidden;"><div class="t" style="left:0;top:15.62px;font-size:18.4px;color:#333;">21</div></div><div style="left:3103px;top:1829.7px;width:60px;height:30px;overflow:hidden;"><div class="t" style="left:0;top:15.62px;font-size:18.4px;color:#333;">Right</div></div><div style="left:3172.5px;top:1829.7px;width:29.1px;height:30px;overflow:hidden;"><div class="t" style="left:0;top:15.62px;font-size:18.4px;color:#333;">ToolKit</div></div><svg style="position:absolute;left:2144px;top:1869.4px;" width="18" height="24" viewBox="0 0 18 24"><rect x="5.5" y="1.5" width="10" height="19" fill="#c9c9c9" stroke="#777" stroke-width="1.6"/><rect x="1.5" y="15" width="6.5" height="6.5" fill="#fff6b0" stroke="#7a6a00" stroke-width="1.4"/></svg><div style="left:2176.4px;top:1863.4px;width:233.6px;height:30px;overflow:hidden;"><div class="t" style="left:0;top:15.62px;font-size:18.4px;color:#333;">DDJNL-2020K-15/DNMX-1...</div></div><div style="left:2418.7px;top:1863.4px;width:75.3px;height:30px;overflow:hidden;"><div class="t" style="left:0;top:15.62px;font-size:18.4px;color:#333;">1006</div></div><div style="left:2503.4px;top:1863.4px;width:44.6px;height:30px;overflow:hidden;"><div class="t" style="left:0;top:15.62px;font-size:18.4px;color:#333;">6</div></div><div style="left:2557px;top:1863.4px;width:45px;height:30px;overflow:hidden;"><div class="t" style="left:0;top:15.62px;font-size:18.4px;color:#333;">0</div></div><div style="left:2611.3px;top:1863.4px;width:251.7px;height:30px;overflow:hidden;"><div class="t" style="left:0;top:15.62px;font-size:18.4px;color:#333;">Проходной</div></div><div style="left:2873.2px;top:1863.4px;width:66.8px;height:30px;overflow:hidden;"><div class="t" style="left:0;top:15.62px;font-size:18.4px;color:#333;">2</div></div><div style="left:2949.3px;top:1863.4px;width:67.7px;height:30px;overflow:hidden;"><div class="t" style="left:0;top:15.62px;font-size:18.4px;color:#333;">0.4</div></div><div style="left:3026.9px;top:1863.4px;width:67.1px;height:30px;overflow:hidden;"><div class="t" style="left:0;top:15.62px;font-size:18.4px;color:#333;">12</div></div><div style="left:3103px;top:1863.4px;width:60px;height:30px;overflow:hidden;"><div class="t" style="left:0;top:15.62px;font-size:18.4px;color:#333;">Left</div></div><div style="left:3172.5px;top:1863.4px;width:29.1px;height:30px;overflow:hidden;"><div class="t" style="left:0;top:15.62px;font-size:18.4px;color:#333;">ToolKit</div></div></div>
</body></html>
